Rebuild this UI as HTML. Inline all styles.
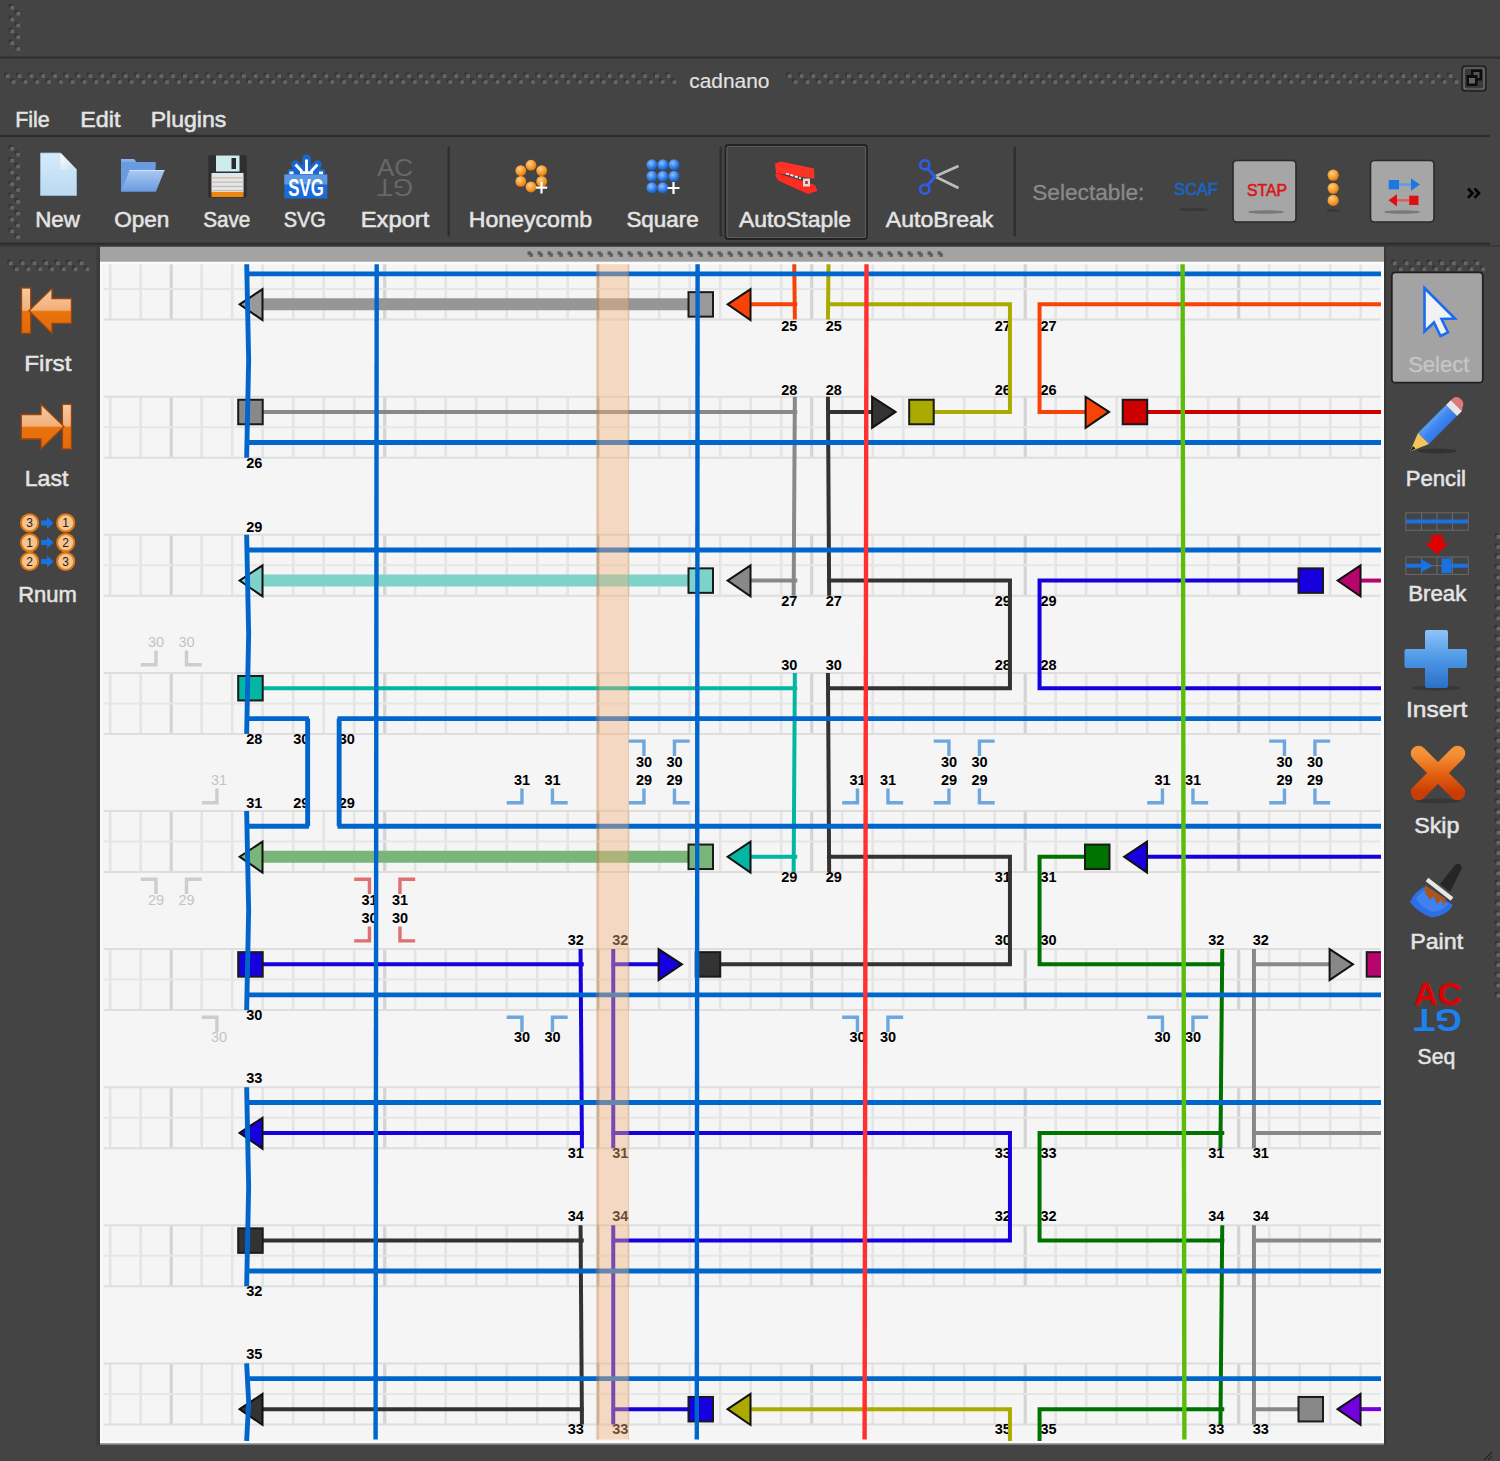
<!DOCTYPE html>
<html><head><meta charset="utf-8"><title>cadnano</title>
<style>
html,body{margin:0;padding:0;}
body{width:1500px;height:1461px;overflow:hidden;background:#444444;position:relative;font-family:"Liberation Sans",sans-serif;}
.lb{position:absolute;text-align:center;line-height:1;white-space:nowrap;-webkit-text-stroke:0.45px currentColor;}
.mn{position:absolute;line-height:1;white-space:nowrap;-webkit-text-stroke:0.45px currentColor;}
.abs{position:absolute;}
svg text.n{font-family:"Liberation Sans",sans-serif;font-weight:bold;font-size:14.5px;}
svg text.g{font-family:"Liberation Sans",sans-serif;font-weight:normal;font-size:14.5px;}
</style></head><body>

<svg class="abs" style="left:0;top:0" width="1500" height="1461">
<rect x="0" y="56.5" width="1500" height="2.2" fill="#303030"/>
<rect x="0" y="134.8" width="1490" height="2.2" fill="#2c2c2c"/>
<rect x="0" y="242.6" width="1490" height="2.6" fill="#2e2e2e"/>
<rect x="0" y="245.2" width="1500" height="1.6" fill="#3a3a3a"/>
<rect x="8.7" y="4.2" width="3.4" height="3.4" fill="#343434"/><rect x="10.5" y="6.0" width="3.6" height="3.6" fill="#676767"/><rect x="14.7" y="10.1" width="3.4" height="3.4" fill="#343434"/><rect x="16.5" y="11.9" width="3.6" height="3.6" fill="#676767"/><rect x="8.7" y="16.0" width="3.4" height="3.4" fill="#343434"/><rect x="10.5" y="17.8" width="3.6" height="3.6" fill="#676767"/><rect x="14.7" y="21.9" width="3.4" height="3.4" fill="#343434"/><rect x="16.5" y="23.7" width="3.6" height="3.6" fill="#676767"/><rect x="8.7" y="27.8" width="3.4" height="3.4" fill="#343434"/><rect x="10.5" y="29.6" width="3.6" height="3.6" fill="#676767"/><rect x="14.7" y="33.7" width="3.4" height="3.4" fill="#343434"/><rect x="16.5" y="35.5" width="3.6" height="3.6" fill="#676767"/><rect x="8.7" y="39.6" width="3.4" height="3.4" fill="#343434"/><rect x="10.5" y="41.4" width="3.6" height="3.6" fill="#676767"/><rect x="14.7" y="45.5" width="3.4" height="3.4" fill="#343434"/><rect x="16.5" y="47.3" width="3.6" height="3.6" fill="#676767"/>
<rect x="4.2" y="72.5" width="3.4" height="3.4" fill="#343434"/><rect x="6.0" y="74.3" width="3.6" height="3.6" fill="#676767"/><rect x="10.1" y="78.5" width="3.4" height="3.4" fill="#343434"/><rect x="11.9" y="80.3" width="3.6" height="3.6" fill="#676767"/><rect x="16.0" y="72.5" width="3.4" height="3.4" fill="#343434"/><rect x="17.8" y="74.3" width="3.6" height="3.6" fill="#676767"/><rect x="21.9" y="78.5" width="3.4" height="3.4" fill="#343434"/><rect x="23.7" y="80.3" width="3.6" height="3.6" fill="#676767"/><rect x="27.8" y="72.5" width="3.4" height="3.4" fill="#343434"/><rect x="29.6" y="74.3" width="3.6" height="3.6" fill="#676767"/><rect x="33.7" y="78.5" width="3.4" height="3.4" fill="#343434"/><rect x="35.5" y="80.3" width="3.6" height="3.6" fill="#676767"/><rect x="39.6" y="72.5" width="3.4" height="3.4" fill="#343434"/><rect x="41.4" y="74.3" width="3.6" height="3.6" fill="#676767"/><rect x="45.5" y="78.5" width="3.4" height="3.4" fill="#343434"/><rect x="47.3" y="80.3" width="3.6" height="3.6" fill="#676767"/><rect x="51.4" y="72.5" width="3.4" height="3.4" fill="#343434"/><rect x="53.2" y="74.3" width="3.6" height="3.6" fill="#676767"/><rect x="57.3" y="78.5" width="3.4" height="3.4" fill="#343434"/><rect x="59.1" y="80.3" width="3.6" height="3.6" fill="#676767"/><rect x="63.2" y="72.5" width="3.4" height="3.4" fill="#343434"/><rect x="65.0" y="74.3" width="3.6" height="3.6" fill="#676767"/><rect x="69.1" y="78.5" width="3.4" height="3.4" fill="#343434"/><rect x="70.9" y="80.3" width="3.6" height="3.6" fill="#676767"/><rect x="75.0" y="72.5" width="3.4" height="3.4" fill="#343434"/><rect x="76.8" y="74.3" width="3.6" height="3.6" fill="#676767"/><rect x="80.9" y="78.5" width="3.4" height="3.4" fill="#343434"/><rect x="82.7" y="80.3" width="3.6" height="3.6" fill="#676767"/><rect x="86.8" y="72.5" width="3.4" height="3.4" fill="#343434"/><rect x="88.6" y="74.3" width="3.6" height="3.6" fill="#676767"/><rect x="92.7" y="78.5" width="3.4" height="3.4" fill="#343434"/><rect x="94.5" y="80.3" width="3.6" height="3.6" fill="#676767"/><rect x="98.6" y="72.5" width="3.4" height="3.4" fill="#343434"/><rect x="100.4" y="74.3" width="3.6" height="3.6" fill="#676767"/><rect x="104.5" y="78.5" width="3.4" height="3.4" fill="#343434"/><rect x="106.3" y="80.3" width="3.6" height="3.6" fill="#676767"/><rect x="110.4" y="72.5" width="3.4" height="3.4" fill="#343434"/><rect x="112.2" y="74.3" width="3.6" height="3.6" fill="#676767"/><rect x="116.3" y="78.5" width="3.4" height="3.4" fill="#343434"/><rect x="118.1" y="80.3" width="3.6" height="3.6" fill="#676767"/><rect x="122.2" y="72.5" width="3.4" height="3.4" fill="#343434"/><rect x="124.0" y="74.3" width="3.6" height="3.6" fill="#676767"/><rect x="128.1" y="78.5" width="3.4" height="3.4" fill="#343434"/><rect x="129.9" y="80.3" width="3.6" height="3.6" fill="#676767"/><rect x="134.0" y="72.5" width="3.4" height="3.4" fill="#343434"/><rect x="135.8" y="74.3" width="3.6" height="3.6" fill="#676767"/><rect x="139.9" y="78.5" width="3.4" height="3.4" fill="#343434"/><rect x="141.7" y="80.3" width="3.6" height="3.6" fill="#676767"/><rect x="145.8" y="72.5" width="3.4" height="3.4" fill="#343434"/><rect x="147.6" y="74.3" width="3.6" height="3.6" fill="#676767"/><rect x="151.7" y="78.5" width="3.4" height="3.4" fill="#343434"/><rect x="153.5" y="80.3" width="3.6" height="3.6" fill="#676767"/><rect x="157.6" y="72.5" width="3.4" height="3.4" fill="#343434"/><rect x="159.4" y="74.3" width="3.6" height="3.6" fill="#676767"/><rect x="163.5" y="78.5" width="3.4" height="3.4" fill="#343434"/><rect x="165.3" y="80.3" width="3.6" height="3.6" fill="#676767"/><rect x="169.4" y="72.5" width="3.4" height="3.4" fill="#343434"/><rect x="171.2" y="74.3" width="3.6" height="3.6" fill="#676767"/><rect x="175.3" y="78.5" width="3.4" height="3.4" fill="#343434"/><rect x="177.1" y="80.3" width="3.6" height="3.6" fill="#676767"/><rect x="181.2" y="72.5" width="3.4" height="3.4" fill="#343434"/><rect x="183.0" y="74.3" width="3.6" height="3.6" fill="#676767"/><rect x="187.1" y="78.5" width="3.4" height="3.4" fill="#343434"/><rect x="188.9" y="80.3" width="3.6" height="3.6" fill="#676767"/><rect x="193.0" y="72.5" width="3.4" height="3.4" fill="#343434"/><rect x="194.8" y="74.3" width="3.6" height="3.6" fill="#676767"/><rect x="198.9" y="78.5" width="3.4" height="3.4" fill="#343434"/><rect x="200.7" y="80.3" width="3.6" height="3.6" fill="#676767"/><rect x="204.8" y="72.5" width="3.4" height="3.4" fill="#343434"/><rect x="206.6" y="74.3" width="3.6" height="3.6" fill="#676767"/><rect x="210.7" y="78.5" width="3.4" height="3.4" fill="#343434"/><rect x="212.5" y="80.3" width="3.6" height="3.6" fill="#676767"/><rect x="216.6" y="72.5" width="3.4" height="3.4" fill="#343434"/><rect x="218.4" y="74.3" width="3.6" height="3.6" fill="#676767"/><rect x="222.5" y="78.5" width="3.4" height="3.4" fill="#343434"/><rect x="224.3" y="80.3" width="3.6" height="3.6" fill="#676767"/><rect x="228.4" y="72.5" width="3.4" height="3.4" fill="#343434"/><rect x="230.2" y="74.3" width="3.6" height="3.6" fill="#676767"/><rect x="234.3" y="78.5" width="3.4" height="3.4" fill="#343434"/><rect x="236.1" y="80.3" width="3.6" height="3.6" fill="#676767"/><rect x="240.2" y="72.5" width="3.4" height="3.4" fill="#343434"/><rect x="242.0" y="74.3" width="3.6" height="3.6" fill="#676767"/><rect x="246.1" y="78.5" width="3.4" height="3.4" fill="#343434"/><rect x="247.9" y="80.3" width="3.6" height="3.6" fill="#676767"/><rect x="252.0" y="72.5" width="3.4" height="3.4" fill="#343434"/><rect x="253.8" y="74.3" width="3.6" height="3.6" fill="#676767"/><rect x="257.9" y="78.5" width="3.4" height="3.4" fill="#343434"/><rect x="259.7" y="80.3" width="3.6" height="3.6" fill="#676767"/><rect x="263.8" y="72.5" width="3.4" height="3.4" fill="#343434"/><rect x="265.6" y="74.3" width="3.6" height="3.6" fill="#676767"/><rect x="269.7" y="78.5" width="3.4" height="3.4" fill="#343434"/><rect x="271.5" y="80.3" width="3.6" height="3.6" fill="#676767"/><rect x="275.6" y="72.5" width="3.4" height="3.4" fill="#343434"/><rect x="277.4" y="74.3" width="3.6" height="3.6" fill="#676767"/><rect x="281.5" y="78.5" width="3.4" height="3.4" fill="#343434"/><rect x="283.3" y="80.3" width="3.6" height="3.6" fill="#676767"/><rect x="287.4" y="72.5" width="3.4" height="3.4" fill="#343434"/><rect x="289.2" y="74.3" width="3.6" height="3.6" fill="#676767"/><rect x="293.3" y="78.5" width="3.4" height="3.4" fill="#343434"/><rect x="295.1" y="80.3" width="3.6" height="3.6" fill="#676767"/><rect x="299.2" y="72.5" width="3.4" height="3.4" fill="#343434"/><rect x="301.0" y="74.3" width="3.6" height="3.6" fill="#676767"/><rect x="305.1" y="78.5" width="3.4" height="3.4" fill="#343434"/><rect x="306.9" y="80.3" width="3.6" height="3.6" fill="#676767"/><rect x="311.0" y="72.5" width="3.4" height="3.4" fill="#343434"/><rect x="312.8" y="74.3" width="3.6" height="3.6" fill="#676767"/><rect x="316.9" y="78.5" width="3.4" height="3.4" fill="#343434"/><rect x="318.7" y="80.3" width="3.6" height="3.6" fill="#676767"/><rect x="322.8" y="72.5" width="3.4" height="3.4" fill="#343434"/><rect x="324.6" y="74.3" width="3.6" height="3.6" fill="#676767"/><rect x="328.7" y="78.5" width="3.4" height="3.4" fill="#343434"/><rect x="330.5" y="80.3" width="3.6" height="3.6" fill="#676767"/><rect x="334.6" y="72.5" width="3.4" height="3.4" fill="#343434"/><rect x="336.4" y="74.3" width="3.6" height="3.6" fill="#676767"/><rect x="340.5" y="78.5" width="3.4" height="3.4" fill="#343434"/><rect x="342.3" y="80.3" width="3.6" height="3.6" fill="#676767"/><rect x="346.4" y="72.5" width="3.4" height="3.4" fill="#343434"/><rect x="348.2" y="74.3" width="3.6" height="3.6" fill="#676767"/><rect x="352.3" y="78.5" width="3.4" height="3.4" fill="#343434"/><rect x="354.1" y="80.3" width="3.6" height="3.6" fill="#676767"/><rect x="358.2" y="72.5" width="3.4" height="3.4" fill="#343434"/><rect x="360.0" y="74.3" width="3.6" height="3.6" fill="#676767"/><rect x="364.1" y="78.5" width="3.4" height="3.4" fill="#343434"/><rect x="365.9" y="80.3" width="3.6" height="3.6" fill="#676767"/><rect x="370.0" y="72.5" width="3.4" height="3.4" fill="#343434"/><rect x="371.8" y="74.3" width="3.6" height="3.6" fill="#676767"/><rect x="375.9" y="78.5" width="3.4" height="3.4" fill="#343434"/><rect x="377.7" y="80.3" width="3.6" height="3.6" fill="#676767"/><rect x="381.8" y="72.5" width="3.4" height="3.4" fill="#343434"/><rect x="383.6" y="74.3" width="3.6" height="3.6" fill="#676767"/><rect x="387.7" y="78.5" width="3.4" height="3.4" fill="#343434"/><rect x="389.5" y="80.3" width="3.6" height="3.6" fill="#676767"/><rect x="393.6" y="72.5" width="3.4" height="3.4" fill="#343434"/><rect x="395.4" y="74.3" width="3.6" height="3.6" fill="#676767"/><rect x="399.5" y="78.5" width="3.4" height="3.4" fill="#343434"/><rect x="401.3" y="80.3" width="3.6" height="3.6" fill="#676767"/><rect x="405.4" y="72.5" width="3.4" height="3.4" fill="#343434"/><rect x="407.2" y="74.3" width="3.6" height="3.6" fill="#676767"/><rect x="411.3" y="78.5" width="3.4" height="3.4" fill="#343434"/><rect x="413.1" y="80.3" width="3.6" height="3.6" fill="#676767"/><rect x="417.2" y="72.5" width="3.4" height="3.4" fill="#343434"/><rect x="419.0" y="74.3" width="3.6" height="3.6" fill="#676767"/><rect x="423.1" y="78.5" width="3.4" height="3.4" fill="#343434"/><rect x="424.9" y="80.3" width="3.6" height="3.6" fill="#676767"/><rect x="429.0" y="72.5" width="3.4" height="3.4" fill="#343434"/><rect x="430.8" y="74.3" width="3.6" height="3.6" fill="#676767"/><rect x="434.9" y="78.5" width="3.4" height="3.4" fill="#343434"/><rect x="436.7" y="80.3" width="3.6" height="3.6" fill="#676767"/><rect x="440.8" y="72.5" width="3.4" height="3.4" fill="#343434"/><rect x="442.6" y="74.3" width="3.6" height="3.6" fill="#676767"/><rect x="446.7" y="78.5" width="3.4" height="3.4" fill="#343434"/><rect x="448.5" y="80.3" width="3.6" height="3.6" fill="#676767"/><rect x="452.6" y="72.5" width="3.4" height="3.4" fill="#343434"/><rect x="454.4" y="74.3" width="3.6" height="3.6" fill="#676767"/><rect x="458.5" y="78.5" width="3.4" height="3.4" fill="#343434"/><rect x="460.3" y="80.3" width="3.6" height="3.6" fill="#676767"/><rect x="464.4" y="72.5" width="3.4" height="3.4" fill="#343434"/><rect x="466.2" y="74.3" width="3.6" height="3.6" fill="#676767"/><rect x="470.3" y="78.5" width="3.4" height="3.4" fill="#343434"/><rect x="472.1" y="80.3" width="3.6" height="3.6" fill="#676767"/><rect x="476.2" y="72.5" width="3.4" height="3.4" fill="#343434"/><rect x="478.0" y="74.3" width="3.6" height="3.6" fill="#676767"/><rect x="482.1" y="78.5" width="3.4" height="3.4" fill="#343434"/><rect x="483.9" y="80.3" width="3.6" height="3.6" fill="#676767"/><rect x="488.0" y="72.5" width="3.4" height="3.4" fill="#343434"/><rect x="489.8" y="74.3" width="3.6" height="3.6" fill="#676767"/><rect x="493.9" y="78.5" width="3.4" height="3.4" fill="#343434"/><rect x="495.7" y="80.3" width="3.6" height="3.6" fill="#676767"/><rect x="499.8" y="72.5" width="3.4" height="3.4" fill="#343434"/><rect x="501.6" y="74.3" width="3.6" height="3.6" fill="#676767"/><rect x="505.7" y="78.5" width="3.4" height="3.4" fill="#343434"/><rect x="507.5" y="80.3" width="3.6" height="3.6" fill="#676767"/><rect x="511.6" y="72.5" width="3.4" height="3.4" fill="#343434"/><rect x="513.4" y="74.3" width="3.6" height="3.6" fill="#676767"/><rect x="517.5" y="78.5" width="3.4" height="3.4" fill="#343434"/><rect x="519.3" y="80.3" width="3.6" height="3.6" fill="#676767"/><rect x="523.4" y="72.5" width="3.4" height="3.4" fill="#343434"/><rect x="525.2" y="74.3" width="3.6" height="3.6" fill="#676767"/><rect x="529.3" y="78.5" width="3.4" height="3.4" fill="#343434"/><rect x="531.1" y="80.3" width="3.6" height="3.6" fill="#676767"/><rect x="535.2" y="72.5" width="3.4" height="3.4" fill="#343434"/><rect x="537.0" y="74.3" width="3.6" height="3.6" fill="#676767"/><rect x="541.1" y="78.5" width="3.4" height="3.4" fill="#343434"/><rect x="542.9" y="80.3" width="3.6" height="3.6" fill="#676767"/><rect x="547.0" y="72.5" width="3.4" height="3.4" fill="#343434"/><rect x="548.8" y="74.3" width="3.6" height="3.6" fill="#676767"/><rect x="552.9" y="78.5" width="3.4" height="3.4" fill="#343434"/><rect x="554.7" y="80.3" width="3.6" height="3.6" fill="#676767"/><rect x="558.8" y="72.5" width="3.4" height="3.4" fill="#343434"/><rect x="560.6" y="74.3" width="3.6" height="3.6" fill="#676767"/><rect x="564.7" y="78.5" width="3.4" height="3.4" fill="#343434"/><rect x="566.5" y="80.3" width="3.6" height="3.6" fill="#676767"/><rect x="570.6" y="72.5" width="3.4" height="3.4" fill="#343434"/><rect x="572.4" y="74.3" width="3.6" height="3.6" fill="#676767"/><rect x="576.5" y="78.5" width="3.4" height="3.4" fill="#343434"/><rect x="578.3" y="80.3" width="3.6" height="3.6" fill="#676767"/><rect x="582.4" y="72.5" width="3.4" height="3.4" fill="#343434"/><rect x="584.2" y="74.3" width="3.6" height="3.6" fill="#676767"/><rect x="588.3" y="78.5" width="3.4" height="3.4" fill="#343434"/><rect x="590.1" y="80.3" width="3.6" height="3.6" fill="#676767"/><rect x="594.2" y="72.5" width="3.4" height="3.4" fill="#343434"/><rect x="596.0" y="74.3" width="3.6" height="3.6" fill="#676767"/><rect x="600.1" y="78.5" width="3.4" height="3.4" fill="#343434"/><rect x="601.9" y="80.3" width="3.6" height="3.6" fill="#676767"/><rect x="606.0" y="72.5" width="3.4" height="3.4" fill="#343434"/><rect x="607.8" y="74.3" width="3.6" height="3.6" fill="#676767"/><rect x="611.9" y="78.5" width="3.4" height="3.4" fill="#343434"/><rect x="613.7" y="80.3" width="3.6" height="3.6" fill="#676767"/><rect x="617.8" y="72.5" width="3.4" height="3.4" fill="#343434"/><rect x="619.6" y="74.3" width="3.6" height="3.6" fill="#676767"/><rect x="623.7" y="78.5" width="3.4" height="3.4" fill="#343434"/><rect x="625.5" y="80.3" width="3.6" height="3.6" fill="#676767"/><rect x="629.6" y="72.5" width="3.4" height="3.4" fill="#343434"/><rect x="631.4" y="74.3" width="3.6" height="3.6" fill="#676767"/><rect x="635.5" y="78.5" width="3.4" height="3.4" fill="#343434"/><rect x="637.3" y="80.3" width="3.6" height="3.6" fill="#676767"/><rect x="641.4" y="72.5" width="3.4" height="3.4" fill="#343434"/><rect x="643.2" y="74.3" width="3.6" height="3.6" fill="#676767"/><rect x="647.3" y="78.5" width="3.4" height="3.4" fill="#343434"/><rect x="649.1" y="80.3" width="3.6" height="3.6" fill="#676767"/><rect x="653.2" y="72.5" width="3.4" height="3.4" fill="#343434"/><rect x="655.0" y="74.3" width="3.6" height="3.6" fill="#676767"/><rect x="659.1" y="78.5" width="3.4" height="3.4" fill="#343434"/><rect x="660.9" y="80.3" width="3.6" height="3.6" fill="#676767"/><rect x="665.0" y="72.5" width="3.4" height="3.4" fill="#343434"/><rect x="666.8" y="74.3" width="3.6" height="3.6" fill="#676767"/><rect x="670.9" y="78.5" width="3.4" height="3.4" fill="#343434"/><rect x="672.7" y="80.3" width="3.6" height="3.6" fill="#676767"/>
<rect x="786.2" y="72.5" width="3.4" height="3.4" fill="#343434"/><rect x="788.0" y="74.3" width="3.6" height="3.6" fill="#676767"/><rect x="792.1" y="78.5" width="3.4" height="3.4" fill="#343434"/><rect x="793.9" y="80.3" width="3.6" height="3.6" fill="#676767"/><rect x="798.0" y="72.5" width="3.4" height="3.4" fill="#343434"/><rect x="799.8" y="74.3" width="3.6" height="3.6" fill="#676767"/><rect x="803.9" y="78.5" width="3.4" height="3.4" fill="#343434"/><rect x="805.7" y="80.3" width="3.6" height="3.6" fill="#676767"/><rect x="809.8" y="72.5" width="3.4" height="3.4" fill="#343434"/><rect x="811.6" y="74.3" width="3.6" height="3.6" fill="#676767"/><rect x="815.7" y="78.5" width="3.4" height="3.4" fill="#343434"/><rect x="817.5" y="80.3" width="3.6" height="3.6" fill="#676767"/><rect x="821.6" y="72.5" width="3.4" height="3.4" fill="#343434"/><rect x="823.4" y="74.3" width="3.6" height="3.6" fill="#676767"/><rect x="827.5" y="78.5" width="3.4" height="3.4" fill="#343434"/><rect x="829.3" y="80.3" width="3.6" height="3.6" fill="#676767"/><rect x="833.4" y="72.5" width="3.4" height="3.4" fill="#343434"/><rect x="835.2" y="74.3" width="3.6" height="3.6" fill="#676767"/><rect x="839.3" y="78.5" width="3.4" height="3.4" fill="#343434"/><rect x="841.1" y="80.3" width="3.6" height="3.6" fill="#676767"/><rect x="845.2" y="72.5" width="3.4" height="3.4" fill="#343434"/><rect x="847.0" y="74.3" width="3.6" height="3.6" fill="#676767"/><rect x="851.1" y="78.5" width="3.4" height="3.4" fill="#343434"/><rect x="852.9" y="80.3" width="3.6" height="3.6" fill="#676767"/><rect x="857.0" y="72.5" width="3.4" height="3.4" fill="#343434"/><rect x="858.8" y="74.3" width="3.6" height="3.6" fill="#676767"/><rect x="862.9" y="78.5" width="3.4" height="3.4" fill="#343434"/><rect x="864.7" y="80.3" width="3.6" height="3.6" fill="#676767"/><rect x="868.8" y="72.5" width="3.4" height="3.4" fill="#343434"/><rect x="870.6" y="74.3" width="3.6" height="3.6" fill="#676767"/><rect x="874.7" y="78.5" width="3.4" height="3.4" fill="#343434"/><rect x="876.5" y="80.3" width="3.6" height="3.6" fill="#676767"/><rect x="880.6" y="72.5" width="3.4" height="3.4" fill="#343434"/><rect x="882.4" y="74.3" width="3.6" height="3.6" fill="#676767"/><rect x="886.5" y="78.5" width="3.4" height="3.4" fill="#343434"/><rect x="888.3" y="80.3" width="3.6" height="3.6" fill="#676767"/><rect x="892.4" y="72.5" width="3.4" height="3.4" fill="#343434"/><rect x="894.2" y="74.3" width="3.6" height="3.6" fill="#676767"/><rect x="898.3" y="78.5" width="3.4" height="3.4" fill="#343434"/><rect x="900.1" y="80.3" width="3.6" height="3.6" fill="#676767"/><rect x="904.2" y="72.5" width="3.4" height="3.4" fill="#343434"/><rect x="906.0" y="74.3" width="3.6" height="3.6" fill="#676767"/><rect x="910.1" y="78.5" width="3.4" height="3.4" fill="#343434"/><rect x="911.9" y="80.3" width="3.6" height="3.6" fill="#676767"/><rect x="916.0" y="72.5" width="3.4" height="3.4" fill="#343434"/><rect x="917.8" y="74.3" width="3.6" height="3.6" fill="#676767"/><rect x="921.9" y="78.5" width="3.4" height="3.4" fill="#343434"/><rect x="923.7" y="80.3" width="3.6" height="3.6" fill="#676767"/><rect x="927.8" y="72.5" width="3.4" height="3.4" fill="#343434"/><rect x="929.6" y="74.3" width="3.6" height="3.6" fill="#676767"/><rect x="933.7" y="78.5" width="3.4" height="3.4" fill="#343434"/><rect x="935.5" y="80.3" width="3.6" height="3.6" fill="#676767"/><rect x="939.6" y="72.5" width="3.4" height="3.4" fill="#343434"/><rect x="941.4" y="74.3" width="3.6" height="3.6" fill="#676767"/><rect x="945.5" y="78.5" width="3.4" height="3.4" fill="#343434"/><rect x="947.3" y="80.3" width="3.6" height="3.6" fill="#676767"/><rect x="951.4" y="72.5" width="3.4" height="3.4" fill="#343434"/><rect x="953.2" y="74.3" width="3.6" height="3.6" fill="#676767"/><rect x="957.3" y="78.5" width="3.4" height="3.4" fill="#343434"/><rect x="959.1" y="80.3" width="3.6" height="3.6" fill="#676767"/><rect x="963.2" y="72.5" width="3.4" height="3.4" fill="#343434"/><rect x="965.0" y="74.3" width="3.6" height="3.6" fill="#676767"/><rect x="969.1" y="78.5" width="3.4" height="3.4" fill="#343434"/><rect x="970.9" y="80.3" width="3.6" height="3.6" fill="#676767"/><rect x="975.0" y="72.5" width="3.4" height="3.4" fill="#343434"/><rect x="976.8" y="74.3" width="3.6" height="3.6" fill="#676767"/><rect x="980.9" y="78.5" width="3.4" height="3.4" fill="#343434"/><rect x="982.7" y="80.3" width="3.6" height="3.6" fill="#676767"/><rect x="986.8" y="72.5" width="3.4" height="3.4" fill="#343434"/><rect x="988.6" y="74.3" width="3.6" height="3.6" fill="#676767"/><rect x="992.7" y="78.5" width="3.4" height="3.4" fill="#343434"/><rect x="994.5" y="80.3" width="3.6" height="3.6" fill="#676767"/><rect x="998.6" y="72.5" width="3.4" height="3.4" fill="#343434"/><rect x="1000.4" y="74.3" width="3.6" height="3.6" fill="#676767"/><rect x="1004.5" y="78.5" width="3.4" height="3.4" fill="#343434"/><rect x="1006.3" y="80.3" width="3.6" height="3.6" fill="#676767"/><rect x="1010.4" y="72.5" width="3.4" height="3.4" fill="#343434"/><rect x="1012.2" y="74.3" width="3.6" height="3.6" fill="#676767"/><rect x="1016.3" y="78.5" width="3.4" height="3.4" fill="#343434"/><rect x="1018.1" y="80.3" width="3.6" height="3.6" fill="#676767"/><rect x="1022.2" y="72.5" width="3.4" height="3.4" fill="#343434"/><rect x="1024.0" y="74.3" width="3.6" height="3.6" fill="#676767"/><rect x="1028.1" y="78.5" width="3.4" height="3.4" fill="#343434"/><rect x="1029.9" y="80.3" width="3.6" height="3.6" fill="#676767"/><rect x="1034.0" y="72.5" width="3.4" height="3.4" fill="#343434"/><rect x="1035.8" y="74.3" width="3.6" height="3.6" fill="#676767"/><rect x="1039.9" y="78.5" width="3.4" height="3.4" fill="#343434"/><rect x="1041.7" y="80.3" width="3.6" height="3.6" fill="#676767"/><rect x="1045.8" y="72.5" width="3.4" height="3.4" fill="#343434"/><rect x="1047.6" y="74.3" width="3.6" height="3.6" fill="#676767"/><rect x="1051.7" y="78.5" width="3.4" height="3.4" fill="#343434"/><rect x="1053.5" y="80.3" width="3.6" height="3.6" fill="#676767"/><rect x="1057.6" y="72.5" width="3.4" height="3.4" fill="#343434"/><rect x="1059.4" y="74.3" width="3.6" height="3.6" fill="#676767"/><rect x="1063.5" y="78.5" width="3.4" height="3.4" fill="#343434"/><rect x="1065.3" y="80.3" width="3.6" height="3.6" fill="#676767"/><rect x="1069.4" y="72.5" width="3.4" height="3.4" fill="#343434"/><rect x="1071.2" y="74.3" width="3.6" height="3.6" fill="#676767"/><rect x="1075.3" y="78.5" width="3.4" height="3.4" fill="#343434"/><rect x="1077.1" y="80.3" width="3.6" height="3.6" fill="#676767"/><rect x="1081.2" y="72.5" width="3.4" height="3.4" fill="#343434"/><rect x="1083.0" y="74.3" width="3.6" height="3.6" fill="#676767"/><rect x="1087.1" y="78.5" width="3.4" height="3.4" fill="#343434"/><rect x="1088.9" y="80.3" width="3.6" height="3.6" fill="#676767"/><rect x="1093.0" y="72.5" width="3.4" height="3.4" fill="#343434"/><rect x="1094.8" y="74.3" width="3.6" height="3.6" fill="#676767"/><rect x="1098.9" y="78.5" width="3.4" height="3.4" fill="#343434"/><rect x="1100.7" y="80.3" width="3.6" height="3.6" fill="#676767"/><rect x="1104.8" y="72.5" width="3.4" height="3.4" fill="#343434"/><rect x="1106.6" y="74.3" width="3.6" height="3.6" fill="#676767"/><rect x="1110.7" y="78.5" width="3.4" height="3.4" fill="#343434"/><rect x="1112.5" y="80.3" width="3.6" height="3.6" fill="#676767"/><rect x="1116.6" y="72.5" width="3.4" height="3.4" fill="#343434"/><rect x="1118.4" y="74.3" width="3.6" height="3.6" fill="#676767"/><rect x="1122.5" y="78.5" width="3.4" height="3.4" fill="#343434"/><rect x="1124.3" y="80.3" width="3.6" height="3.6" fill="#676767"/><rect x="1128.4" y="72.5" width="3.4" height="3.4" fill="#343434"/><rect x="1130.2" y="74.3" width="3.6" height="3.6" fill="#676767"/><rect x="1134.3" y="78.5" width="3.4" height="3.4" fill="#343434"/><rect x="1136.1" y="80.3" width="3.6" height="3.6" fill="#676767"/><rect x="1140.2" y="72.5" width="3.4" height="3.4" fill="#343434"/><rect x="1142.0" y="74.3" width="3.6" height="3.6" fill="#676767"/><rect x="1146.1" y="78.5" width="3.4" height="3.4" fill="#343434"/><rect x="1147.9" y="80.3" width="3.6" height="3.6" fill="#676767"/><rect x="1152.0" y="72.5" width="3.4" height="3.4" fill="#343434"/><rect x="1153.8" y="74.3" width="3.6" height="3.6" fill="#676767"/><rect x="1157.9" y="78.5" width="3.4" height="3.4" fill="#343434"/><rect x="1159.7" y="80.3" width="3.6" height="3.6" fill="#676767"/><rect x="1163.8" y="72.5" width="3.4" height="3.4" fill="#343434"/><rect x="1165.6" y="74.3" width="3.6" height="3.6" fill="#676767"/><rect x="1169.7" y="78.5" width="3.4" height="3.4" fill="#343434"/><rect x="1171.5" y="80.3" width="3.6" height="3.6" fill="#676767"/><rect x="1175.6" y="72.5" width="3.4" height="3.4" fill="#343434"/><rect x="1177.4" y="74.3" width="3.6" height="3.6" fill="#676767"/><rect x="1181.5" y="78.5" width="3.4" height="3.4" fill="#343434"/><rect x="1183.3" y="80.3" width="3.6" height="3.6" fill="#676767"/><rect x="1187.4" y="72.5" width="3.4" height="3.4" fill="#343434"/><rect x="1189.2" y="74.3" width="3.6" height="3.6" fill="#676767"/><rect x="1193.3" y="78.5" width="3.4" height="3.4" fill="#343434"/><rect x="1195.1" y="80.3" width="3.6" height="3.6" fill="#676767"/><rect x="1199.2" y="72.5" width="3.4" height="3.4" fill="#343434"/><rect x="1201.0" y="74.3" width="3.6" height="3.6" fill="#676767"/><rect x="1205.1" y="78.5" width="3.4" height="3.4" fill="#343434"/><rect x="1206.9" y="80.3" width="3.6" height="3.6" fill="#676767"/><rect x="1211.0" y="72.5" width="3.4" height="3.4" fill="#343434"/><rect x="1212.8" y="74.3" width="3.6" height="3.6" fill="#676767"/><rect x="1216.9" y="78.5" width="3.4" height="3.4" fill="#343434"/><rect x="1218.7" y="80.3" width="3.6" height="3.6" fill="#676767"/><rect x="1222.8" y="72.5" width="3.4" height="3.4" fill="#343434"/><rect x="1224.6" y="74.3" width="3.6" height="3.6" fill="#676767"/><rect x="1228.7" y="78.5" width="3.4" height="3.4" fill="#343434"/><rect x="1230.5" y="80.3" width="3.6" height="3.6" fill="#676767"/><rect x="1234.6" y="72.5" width="3.4" height="3.4" fill="#343434"/><rect x="1236.4" y="74.3" width="3.6" height="3.6" fill="#676767"/><rect x="1240.5" y="78.5" width="3.4" height="3.4" fill="#343434"/><rect x="1242.3" y="80.3" width="3.6" height="3.6" fill="#676767"/><rect x="1246.4" y="72.5" width="3.4" height="3.4" fill="#343434"/><rect x="1248.2" y="74.3" width="3.6" height="3.6" fill="#676767"/><rect x="1252.3" y="78.5" width="3.4" height="3.4" fill="#343434"/><rect x="1254.1" y="80.3" width="3.6" height="3.6" fill="#676767"/><rect x="1258.2" y="72.5" width="3.4" height="3.4" fill="#343434"/><rect x="1260.0" y="74.3" width="3.6" height="3.6" fill="#676767"/><rect x="1264.1" y="78.5" width="3.4" height="3.4" fill="#343434"/><rect x="1265.9" y="80.3" width="3.6" height="3.6" fill="#676767"/><rect x="1270.0" y="72.5" width="3.4" height="3.4" fill="#343434"/><rect x="1271.8" y="74.3" width="3.6" height="3.6" fill="#676767"/><rect x="1275.9" y="78.5" width="3.4" height="3.4" fill="#343434"/><rect x="1277.7" y="80.3" width="3.6" height="3.6" fill="#676767"/><rect x="1281.8" y="72.5" width="3.4" height="3.4" fill="#343434"/><rect x="1283.6" y="74.3" width="3.6" height="3.6" fill="#676767"/><rect x="1287.7" y="78.5" width="3.4" height="3.4" fill="#343434"/><rect x="1289.5" y="80.3" width="3.6" height="3.6" fill="#676767"/><rect x="1293.6" y="72.5" width="3.4" height="3.4" fill="#343434"/><rect x="1295.4" y="74.3" width="3.6" height="3.6" fill="#676767"/><rect x="1299.5" y="78.5" width="3.4" height="3.4" fill="#343434"/><rect x="1301.3" y="80.3" width="3.6" height="3.6" fill="#676767"/><rect x="1305.4" y="72.5" width="3.4" height="3.4" fill="#343434"/><rect x="1307.2" y="74.3" width="3.6" height="3.6" fill="#676767"/><rect x="1311.3" y="78.5" width="3.4" height="3.4" fill="#343434"/><rect x="1313.1" y="80.3" width="3.6" height="3.6" fill="#676767"/><rect x="1317.2" y="72.5" width="3.4" height="3.4" fill="#343434"/><rect x="1319.0" y="74.3" width="3.6" height="3.6" fill="#676767"/><rect x="1323.1" y="78.5" width="3.4" height="3.4" fill="#343434"/><rect x="1324.9" y="80.3" width="3.6" height="3.6" fill="#676767"/><rect x="1329.0" y="72.5" width="3.4" height="3.4" fill="#343434"/><rect x="1330.8" y="74.3" width="3.6" height="3.6" fill="#676767"/><rect x="1334.9" y="78.5" width="3.4" height="3.4" fill="#343434"/><rect x="1336.7" y="80.3" width="3.6" height="3.6" fill="#676767"/><rect x="1340.8" y="72.5" width="3.4" height="3.4" fill="#343434"/><rect x="1342.6" y="74.3" width="3.6" height="3.6" fill="#676767"/><rect x="1346.7" y="78.5" width="3.4" height="3.4" fill="#343434"/><rect x="1348.5" y="80.3" width="3.6" height="3.6" fill="#676767"/><rect x="1352.6" y="72.5" width="3.4" height="3.4" fill="#343434"/><rect x="1354.4" y="74.3" width="3.6" height="3.6" fill="#676767"/><rect x="1358.5" y="78.5" width="3.4" height="3.4" fill="#343434"/><rect x="1360.3" y="80.3" width="3.6" height="3.6" fill="#676767"/><rect x="1364.4" y="72.5" width="3.4" height="3.4" fill="#343434"/><rect x="1366.2" y="74.3" width="3.6" height="3.6" fill="#676767"/><rect x="1370.3" y="78.5" width="3.4" height="3.4" fill="#343434"/><rect x="1372.1" y="80.3" width="3.6" height="3.6" fill="#676767"/><rect x="1376.2" y="72.5" width="3.4" height="3.4" fill="#343434"/><rect x="1378.0" y="74.3" width="3.6" height="3.6" fill="#676767"/><rect x="1382.1" y="78.5" width="3.4" height="3.4" fill="#343434"/><rect x="1383.9" y="80.3" width="3.6" height="3.6" fill="#676767"/><rect x="1388.0" y="72.5" width="3.4" height="3.4" fill="#343434"/><rect x="1389.8" y="74.3" width="3.6" height="3.6" fill="#676767"/><rect x="1393.9" y="78.5" width="3.4" height="3.4" fill="#343434"/><rect x="1395.7" y="80.3" width="3.6" height="3.6" fill="#676767"/><rect x="1399.8" y="72.5" width="3.4" height="3.4" fill="#343434"/><rect x="1401.6" y="74.3" width="3.6" height="3.6" fill="#676767"/><rect x="1405.7" y="78.5" width="3.4" height="3.4" fill="#343434"/><rect x="1407.5" y="80.3" width="3.6" height="3.6" fill="#676767"/><rect x="1411.6" y="72.5" width="3.4" height="3.4" fill="#343434"/><rect x="1413.4" y="74.3" width="3.6" height="3.6" fill="#676767"/><rect x="1417.5" y="78.5" width="3.4" height="3.4" fill="#343434"/><rect x="1419.3" y="80.3" width="3.6" height="3.6" fill="#676767"/><rect x="1423.4" y="72.5" width="3.4" height="3.4" fill="#343434"/><rect x="1425.2" y="74.3" width="3.6" height="3.6" fill="#676767"/><rect x="1429.3" y="78.5" width="3.4" height="3.4" fill="#343434"/><rect x="1431.1" y="80.3" width="3.6" height="3.6" fill="#676767"/><rect x="1435.2" y="72.5" width="3.4" height="3.4" fill="#343434"/><rect x="1437.0" y="74.3" width="3.6" height="3.6" fill="#676767"/><rect x="1441.1" y="78.5" width="3.4" height="3.4" fill="#343434"/><rect x="1442.9" y="80.3" width="3.6" height="3.6" fill="#676767"/><rect x="1447.0" y="72.5" width="3.4" height="3.4" fill="#343434"/><rect x="1448.8" y="74.3" width="3.6" height="3.6" fill="#676767"/><rect x="1452.9" y="78.5" width="3.4" height="3.4" fill="#343434"/><rect x="1454.7" y="80.3" width="3.6" height="3.6" fill="#676767"/>
<rect x="1462" y="66" width="24" height="25" rx="3" fill="#3a3a3a" stroke="#222" stroke-width="1.5"/>
<rect x="1464" y="68" width="20" height="21" rx="2" fill="none" stroke="#777" stroke-width="1.2"/>
<rect x="1471" y="69.5" width="11" height="11" fill="#0c0c0c"/>
<rect x="1473.5" y="72" width="6" height="6" fill="#555"/>
<rect x="1466.5" y="75" width="11" height="11" fill="#0c0c0c"/>
<rect x="1469" y="78" width="6" height="5.5" fill="#666"/>
<rect x="8.5" y="145.2" width="3.4" height="3.4" fill="#343434"/><rect x="10.3" y="147.0" width="3.6" height="3.6" fill="#676767"/><rect x="14.5" y="151.1" width="3.4" height="3.4" fill="#343434"/><rect x="16.3" y="152.9" width="3.6" height="3.6" fill="#676767"/><rect x="8.5" y="157.0" width="3.4" height="3.4" fill="#343434"/><rect x="10.3" y="158.8" width="3.6" height="3.6" fill="#676767"/><rect x="14.5" y="162.9" width="3.4" height="3.4" fill="#343434"/><rect x="16.3" y="164.7" width="3.6" height="3.6" fill="#676767"/><rect x="8.5" y="168.8" width="3.4" height="3.4" fill="#343434"/><rect x="10.3" y="170.6" width="3.6" height="3.6" fill="#676767"/><rect x="14.5" y="174.7" width="3.4" height="3.4" fill="#343434"/><rect x="16.3" y="176.5" width="3.6" height="3.6" fill="#676767"/><rect x="8.5" y="180.6" width="3.4" height="3.4" fill="#343434"/><rect x="10.3" y="182.4" width="3.6" height="3.6" fill="#676767"/><rect x="14.5" y="186.5" width="3.4" height="3.4" fill="#343434"/><rect x="16.3" y="188.3" width="3.6" height="3.6" fill="#676767"/><rect x="8.5" y="192.4" width="3.4" height="3.4" fill="#343434"/><rect x="10.3" y="194.2" width="3.6" height="3.6" fill="#676767"/><rect x="14.5" y="198.3" width="3.4" height="3.4" fill="#343434"/><rect x="16.3" y="200.1" width="3.6" height="3.6" fill="#676767"/><rect x="8.5" y="204.2" width="3.4" height="3.4" fill="#343434"/><rect x="10.3" y="206.0" width="3.6" height="3.6" fill="#676767"/><rect x="14.5" y="210.1" width="3.4" height="3.4" fill="#343434"/><rect x="16.3" y="211.9" width="3.6" height="3.6" fill="#676767"/><rect x="8.5" y="216.0" width="3.4" height="3.4" fill="#343434"/><rect x="10.3" y="217.8" width="3.6" height="3.6" fill="#676767"/><rect x="14.5" y="221.9" width="3.4" height="3.4" fill="#343434"/><rect x="16.3" y="223.7" width="3.6" height="3.6" fill="#676767"/><rect x="8.5" y="227.8" width="3.4" height="3.4" fill="#343434"/><rect x="10.3" y="229.6" width="3.6" height="3.6" fill="#676767"/><rect x="14.5" y="233.7" width="3.4" height="3.4" fill="#343434"/><rect x="16.3" y="235.5" width="3.6" height="3.6" fill="#676767"/>
<rect x="447.5" y="146.5" width="2.4" height="90" fill="#2f2f2f"/>
<rect x="719.5" y="146.5" width="2.4" height="90" fill="#2f2f2f"/>
<rect x="1013.5" y="146.5" width="2.4" height="90" fill="#2f2f2f"/>
<rect x="725.5" y="145" width="141.5" height="94" rx="3" fill="#434343" stroke="#222222" stroke-width="1.8"/>
<rect x="727" y="146.5" width="138.5" height="91" rx="2" fill="none" stroke="#5c5c5c" stroke-width="1.1"/>
<rect x="1233" y="160.5" width="63" height="61.5" rx="4" fill="#a6a6a6" stroke="#2a2a2a" stroke-width="1.6"/>
<rect x="1370.5" y="160.5" width="63.5" height="61.5" rx="4" fill="#a6a6a6" stroke="#2a2a2a" stroke-width="1.6"/>
<rect x="7.2" y="259.7" width="3.4" height="3.4" fill="#343434"/><rect x="9.0" y="261.5" width="3.6" height="3.6" fill="#676767"/><rect x="13.1" y="265.7" width="3.4" height="3.4" fill="#343434"/><rect x="14.9" y="267.5" width="3.6" height="3.6" fill="#676767"/><rect x="19.0" y="259.7" width="3.4" height="3.4" fill="#343434"/><rect x="20.8" y="261.5" width="3.6" height="3.6" fill="#676767"/><rect x="24.9" y="265.7" width="3.4" height="3.4" fill="#343434"/><rect x="26.7" y="267.5" width="3.6" height="3.6" fill="#676767"/><rect x="30.8" y="259.7" width="3.4" height="3.4" fill="#343434"/><rect x="32.6" y="261.5" width="3.6" height="3.6" fill="#676767"/><rect x="36.7" y="265.7" width="3.4" height="3.4" fill="#343434"/><rect x="38.5" y="267.5" width="3.6" height="3.6" fill="#676767"/><rect x="42.6" y="259.7" width="3.4" height="3.4" fill="#343434"/><rect x="44.4" y="261.5" width="3.6" height="3.6" fill="#676767"/><rect x="48.5" y="265.7" width="3.4" height="3.4" fill="#343434"/><rect x="50.3" y="267.5" width="3.6" height="3.6" fill="#676767"/><rect x="54.4" y="259.7" width="3.4" height="3.4" fill="#343434"/><rect x="56.2" y="261.5" width="3.6" height="3.6" fill="#676767"/><rect x="60.3" y="265.7" width="3.4" height="3.4" fill="#343434"/><rect x="62.1" y="267.5" width="3.6" height="3.6" fill="#676767"/><rect x="66.2" y="259.7" width="3.4" height="3.4" fill="#343434"/><rect x="68.0" y="261.5" width="3.6" height="3.6" fill="#676767"/><rect x="72.1" y="265.7" width="3.4" height="3.4" fill="#343434"/><rect x="73.9" y="267.5" width="3.6" height="3.6" fill="#676767"/><rect x="78.0" y="259.7" width="3.4" height="3.4" fill="#343434"/><rect x="79.8" y="261.5" width="3.6" height="3.6" fill="#676767"/><rect x="83.9" y="265.7" width="3.4" height="3.4" fill="#343434"/><rect x="85.7" y="267.5" width="3.6" height="3.6" fill="#676767"/>
<rect x="1391.2" y="259.7" width="3.4" height="3.4" fill="#343434"/><rect x="1393.0" y="261.5" width="3.6" height="3.6" fill="#676767"/><rect x="1397.1" y="265.7" width="3.4" height="3.4" fill="#343434"/><rect x="1398.9" y="267.5" width="3.6" height="3.6" fill="#676767"/><rect x="1403.0" y="259.7" width="3.4" height="3.4" fill="#343434"/><rect x="1404.8" y="261.5" width="3.6" height="3.6" fill="#676767"/><rect x="1408.9" y="265.7" width="3.4" height="3.4" fill="#343434"/><rect x="1410.7" y="267.5" width="3.6" height="3.6" fill="#676767"/><rect x="1414.8" y="259.7" width="3.4" height="3.4" fill="#343434"/><rect x="1416.6" y="261.5" width="3.6" height="3.6" fill="#676767"/><rect x="1420.7" y="265.7" width="3.4" height="3.4" fill="#343434"/><rect x="1422.5" y="267.5" width="3.6" height="3.6" fill="#676767"/><rect x="1426.6" y="259.7" width="3.4" height="3.4" fill="#343434"/><rect x="1428.4" y="261.5" width="3.6" height="3.6" fill="#676767"/><rect x="1432.5" y="265.7" width="3.4" height="3.4" fill="#343434"/><rect x="1434.3" y="267.5" width="3.6" height="3.6" fill="#676767"/><rect x="1438.4" y="259.7" width="3.4" height="3.4" fill="#343434"/><rect x="1440.2" y="261.5" width="3.6" height="3.6" fill="#676767"/><rect x="1444.3" y="265.7" width="3.4" height="3.4" fill="#343434"/><rect x="1446.1" y="267.5" width="3.6" height="3.6" fill="#676767"/><rect x="1450.2" y="259.7" width="3.4" height="3.4" fill="#343434"/><rect x="1452.0" y="261.5" width="3.6" height="3.6" fill="#676767"/><rect x="1456.1" y="265.7" width="3.4" height="3.4" fill="#343434"/><rect x="1457.9" y="267.5" width="3.6" height="3.6" fill="#676767"/><rect x="1462.0" y="259.7" width="3.4" height="3.4" fill="#343434"/><rect x="1463.8" y="261.5" width="3.6" height="3.6" fill="#676767"/><rect x="1467.9" y="265.7" width="3.4" height="3.4" fill="#343434"/><rect x="1469.7" y="267.5" width="3.6" height="3.6" fill="#676767"/><rect x="1473.8" y="259.7" width="3.4" height="3.4" fill="#343434"/><rect x="1475.6" y="261.5" width="3.6" height="3.6" fill="#676767"/><rect x="1479.7" y="265.7" width="3.4" height="3.4" fill="#343434"/><rect x="1481.5" y="267.5" width="3.6" height="3.6" fill="#676767"/>
<rect x="1494.7" y="533.2" width="3.4" height="3.4" fill="#343434"/><rect x="1496.5" y="535.0" width="3.6" height="3.6" fill="#676767"/><rect x="1500.7" y="538.3" width="3.4" height="3.4" fill="#343434"/><rect x="1502.5" y="540.1" width="3.6" height="3.6" fill="#676767"/><rect x="1494.7" y="543.4" width="3.4" height="3.4" fill="#343434"/><rect x="1496.5" y="545.2" width="3.6" height="3.6" fill="#676767"/><rect x="1500.7" y="548.5" width="3.4" height="3.4" fill="#343434"/><rect x="1502.5" y="550.3" width="3.6" height="3.6" fill="#676767"/><rect x="1494.7" y="553.6" width="3.4" height="3.4" fill="#343434"/><rect x="1496.5" y="555.4" width="3.6" height="3.6" fill="#676767"/><rect x="1500.7" y="558.7" width="3.4" height="3.4" fill="#343434"/><rect x="1502.5" y="560.5" width="3.6" height="3.6" fill="#676767"/><rect x="1494.7" y="563.8" width="3.4" height="3.4" fill="#343434"/><rect x="1496.5" y="565.6" width="3.6" height="3.6" fill="#676767"/><rect x="1500.7" y="568.9" width="3.4" height="3.4" fill="#343434"/><rect x="1502.5" y="570.7" width="3.6" height="3.6" fill="#676767"/><rect x="1494.7" y="574.0" width="3.4" height="3.4" fill="#343434"/><rect x="1496.5" y="575.8" width="3.6" height="3.6" fill="#676767"/><rect x="1500.7" y="579.1" width="3.4" height="3.4" fill="#343434"/><rect x="1502.5" y="580.9" width="3.6" height="3.6" fill="#676767"/><rect x="1494.7" y="584.2" width="3.4" height="3.4" fill="#343434"/><rect x="1496.5" y="586.0" width="3.6" height="3.6" fill="#676767"/><rect x="1500.7" y="589.3" width="3.4" height="3.4" fill="#343434"/><rect x="1502.5" y="591.1" width="3.6" height="3.6" fill="#676767"/><rect x="1494.7" y="594.4" width="3.4" height="3.4" fill="#343434"/><rect x="1496.5" y="596.2" width="3.6" height="3.6" fill="#676767"/><rect x="1500.7" y="599.5" width="3.4" height="3.4" fill="#343434"/><rect x="1502.5" y="601.3" width="3.6" height="3.6" fill="#676767"/><rect x="1494.7" y="604.6" width="3.4" height="3.4" fill="#343434"/><rect x="1496.5" y="606.4" width="3.6" height="3.6" fill="#676767"/><rect x="1500.7" y="609.7" width="3.4" height="3.4" fill="#343434"/><rect x="1502.5" y="611.5" width="3.6" height="3.6" fill="#676767"/><rect x="1494.7" y="614.8" width="3.4" height="3.4" fill="#343434"/><rect x="1496.5" y="616.6" width="3.6" height="3.6" fill="#676767"/><rect x="1500.7" y="619.9" width="3.4" height="3.4" fill="#343434"/><rect x="1502.5" y="621.7" width="3.6" height="3.6" fill="#676767"/><rect x="1494.7" y="625.0" width="3.4" height="3.4" fill="#343434"/><rect x="1496.5" y="626.8" width="3.6" height="3.6" fill="#676767"/><rect x="1500.7" y="630.1" width="3.4" height="3.4" fill="#343434"/><rect x="1502.5" y="631.9" width="3.6" height="3.6" fill="#676767"/><rect x="1494.7" y="635.2" width="3.4" height="3.4" fill="#343434"/><rect x="1496.5" y="637.0" width="3.6" height="3.6" fill="#676767"/><rect x="1500.7" y="640.3" width="3.4" height="3.4" fill="#343434"/><rect x="1502.5" y="642.1" width="3.6" height="3.6" fill="#676767"/><rect x="1494.7" y="645.4" width="3.4" height="3.4" fill="#343434"/><rect x="1496.5" y="647.2" width="3.6" height="3.6" fill="#676767"/><rect x="1500.7" y="650.5" width="3.4" height="3.4" fill="#343434"/><rect x="1502.5" y="652.3" width="3.6" height="3.6" fill="#676767"/><rect x="1494.7" y="655.6" width="3.4" height="3.4" fill="#343434"/><rect x="1496.5" y="657.4" width="3.6" height="3.6" fill="#676767"/><rect x="1500.7" y="660.7" width="3.4" height="3.4" fill="#343434"/><rect x="1502.5" y="662.5" width="3.6" height="3.6" fill="#676767"/><rect x="1494.7" y="665.8" width="3.4" height="3.4" fill="#343434"/><rect x="1496.5" y="667.6" width="3.6" height="3.6" fill="#676767"/><rect x="1500.7" y="670.9" width="3.4" height="3.4" fill="#343434"/><rect x="1502.5" y="672.7" width="3.6" height="3.6" fill="#676767"/><rect x="1494.7" y="676.0" width="3.4" height="3.4" fill="#343434"/><rect x="1496.5" y="677.8" width="3.6" height="3.6" fill="#676767"/><rect x="1500.7" y="681.1" width="3.4" height="3.4" fill="#343434"/><rect x="1502.5" y="682.9" width="3.6" height="3.6" fill="#676767"/><rect x="1494.7" y="686.2" width="3.4" height="3.4" fill="#343434"/><rect x="1496.5" y="688.0" width="3.6" height="3.6" fill="#676767"/><rect x="1500.7" y="691.3" width="3.4" height="3.4" fill="#343434"/><rect x="1502.5" y="693.1" width="3.6" height="3.6" fill="#676767"/><rect x="1494.7" y="696.4" width="3.4" height="3.4" fill="#343434"/><rect x="1496.5" y="698.2" width="3.6" height="3.6" fill="#676767"/><rect x="1500.7" y="701.5" width="3.4" height="3.4" fill="#343434"/><rect x="1502.5" y="703.3" width="3.6" height="3.6" fill="#676767"/><rect x="1494.7" y="706.6" width="3.4" height="3.4" fill="#343434"/><rect x="1496.5" y="708.4" width="3.6" height="3.6" fill="#676767"/><rect x="1500.7" y="711.7" width="3.4" height="3.4" fill="#343434"/><rect x="1502.5" y="713.5" width="3.6" height="3.6" fill="#676767"/><rect x="1494.7" y="716.8" width="3.4" height="3.4" fill="#343434"/><rect x="1496.5" y="718.6" width="3.6" height="3.6" fill="#676767"/><rect x="1500.7" y="721.9" width="3.4" height="3.4" fill="#343434"/><rect x="1502.5" y="723.7" width="3.6" height="3.6" fill="#676767"/><rect x="1494.7" y="727.0" width="3.4" height="3.4" fill="#343434"/><rect x="1496.5" y="728.8" width="3.6" height="3.6" fill="#676767"/><rect x="1500.7" y="732.1" width="3.4" height="3.4" fill="#343434"/><rect x="1502.5" y="733.9" width="3.6" height="3.6" fill="#676767"/><rect x="1494.7" y="737.2" width="3.4" height="3.4" fill="#343434"/><rect x="1496.5" y="739.0" width="3.6" height="3.6" fill="#676767"/><rect x="1500.7" y="742.3" width="3.4" height="3.4" fill="#343434"/><rect x="1502.5" y="744.1" width="3.6" height="3.6" fill="#676767"/><rect x="1494.7" y="747.4" width="3.4" height="3.4" fill="#343434"/><rect x="1496.5" y="749.2" width="3.6" height="3.6" fill="#676767"/><rect x="1500.7" y="752.5" width="3.4" height="3.4" fill="#343434"/><rect x="1502.5" y="754.3" width="3.6" height="3.6" fill="#676767"/><rect x="1494.7" y="757.6" width="3.4" height="3.4" fill="#343434"/><rect x="1496.5" y="759.4" width="3.6" height="3.6" fill="#676767"/><rect x="1500.7" y="762.7" width="3.4" height="3.4" fill="#343434"/><rect x="1502.5" y="764.5" width="3.6" height="3.6" fill="#676767"/><rect x="1494.7" y="767.8" width="3.4" height="3.4" fill="#343434"/><rect x="1496.5" y="769.6" width="3.6" height="3.6" fill="#676767"/><rect x="1500.7" y="772.9" width="3.4" height="3.4" fill="#343434"/><rect x="1502.5" y="774.7" width="3.6" height="3.6" fill="#676767"/><rect x="1494.7" y="778.0" width="3.4" height="3.4" fill="#343434"/><rect x="1496.5" y="779.8" width="3.6" height="3.6" fill="#676767"/><rect x="1500.7" y="783.1" width="3.4" height="3.4" fill="#343434"/><rect x="1502.5" y="784.9" width="3.6" height="3.6" fill="#676767"/><rect x="1494.7" y="788.2" width="3.4" height="3.4" fill="#343434"/><rect x="1496.5" y="790.0" width="3.6" height="3.6" fill="#676767"/><rect x="1500.7" y="793.3" width="3.4" height="3.4" fill="#343434"/><rect x="1502.5" y="795.1" width="3.6" height="3.6" fill="#676767"/><rect x="1494.7" y="798.4" width="3.4" height="3.4" fill="#343434"/><rect x="1496.5" y="800.2" width="3.6" height="3.6" fill="#676767"/><rect x="1500.7" y="803.5" width="3.4" height="3.4" fill="#343434"/><rect x="1502.5" y="805.3" width="3.6" height="3.6" fill="#676767"/><rect x="1494.7" y="808.6" width="3.4" height="3.4" fill="#343434"/><rect x="1496.5" y="810.4" width="3.6" height="3.6" fill="#676767"/><rect x="1500.7" y="813.7" width="3.4" height="3.4" fill="#343434"/><rect x="1502.5" y="815.5" width="3.6" height="3.6" fill="#676767"/><rect x="1494.7" y="818.8" width="3.4" height="3.4" fill="#343434"/><rect x="1496.5" y="820.6" width="3.6" height="3.6" fill="#676767"/><rect x="1500.7" y="823.9" width="3.4" height="3.4" fill="#343434"/><rect x="1502.5" y="825.7" width="3.6" height="3.6" fill="#676767"/><rect x="1494.7" y="829.0" width="3.4" height="3.4" fill="#343434"/><rect x="1496.5" y="830.8" width="3.6" height="3.6" fill="#676767"/><rect x="1500.7" y="834.1" width="3.4" height="3.4" fill="#343434"/><rect x="1502.5" y="835.9" width="3.6" height="3.6" fill="#676767"/><rect x="1494.7" y="839.2" width="3.4" height="3.4" fill="#343434"/><rect x="1496.5" y="841.0" width="3.6" height="3.6" fill="#676767"/><rect x="1500.7" y="844.3" width="3.4" height="3.4" fill="#343434"/><rect x="1502.5" y="846.1" width="3.6" height="3.6" fill="#676767"/><rect x="1494.7" y="849.4" width="3.4" height="3.4" fill="#343434"/><rect x="1496.5" y="851.2" width="3.6" height="3.6" fill="#676767"/><rect x="1500.7" y="854.5" width="3.4" height="3.4" fill="#343434"/><rect x="1502.5" y="856.3" width="3.6" height="3.6" fill="#676767"/><rect x="1494.7" y="859.6" width="3.4" height="3.4" fill="#343434"/><rect x="1496.5" y="861.4" width="3.6" height="3.6" fill="#676767"/><rect x="1500.7" y="864.7" width="3.4" height="3.4" fill="#343434"/><rect x="1502.5" y="866.5" width="3.6" height="3.6" fill="#676767"/><rect x="1494.7" y="869.8" width="3.4" height="3.4" fill="#343434"/><rect x="1496.5" y="871.6" width="3.6" height="3.6" fill="#676767"/><rect x="1500.7" y="874.9" width="3.4" height="3.4" fill="#343434"/><rect x="1502.5" y="876.7" width="3.6" height="3.6" fill="#676767"/><rect x="1494.7" y="880.0" width="3.4" height="3.4" fill="#343434"/><rect x="1496.5" y="881.8" width="3.6" height="3.6" fill="#676767"/><rect x="1500.7" y="885.1" width="3.4" height="3.4" fill="#343434"/><rect x="1502.5" y="886.9" width="3.6" height="3.6" fill="#676767"/><rect x="1494.7" y="890.2" width="3.4" height="3.4" fill="#343434"/><rect x="1496.5" y="892.0" width="3.6" height="3.6" fill="#676767"/><rect x="1500.7" y="895.3" width="3.4" height="3.4" fill="#343434"/><rect x="1502.5" y="897.1" width="3.6" height="3.6" fill="#676767"/><rect x="1494.7" y="900.4" width="3.4" height="3.4" fill="#343434"/><rect x="1496.5" y="902.2" width="3.6" height="3.6" fill="#676767"/><rect x="1500.7" y="905.5" width="3.4" height="3.4" fill="#343434"/><rect x="1502.5" y="907.3" width="3.6" height="3.6" fill="#676767"/><rect x="1494.7" y="910.6" width="3.4" height="3.4" fill="#343434"/><rect x="1496.5" y="912.4" width="3.6" height="3.6" fill="#676767"/><rect x="1500.7" y="915.7" width="3.4" height="3.4" fill="#343434"/><rect x="1502.5" y="917.5" width="3.6" height="3.6" fill="#676767"/><rect x="1494.7" y="920.8" width="3.4" height="3.4" fill="#343434"/><rect x="1496.5" y="922.6" width="3.6" height="3.6" fill="#676767"/><rect x="1500.7" y="925.9" width="3.4" height="3.4" fill="#343434"/><rect x="1502.5" y="927.7" width="3.6" height="3.6" fill="#676767"/><rect x="1494.7" y="931.0" width="3.4" height="3.4" fill="#343434"/><rect x="1496.5" y="932.8" width="3.6" height="3.6" fill="#676767"/><rect x="1500.7" y="936.1" width="3.4" height="3.4" fill="#343434"/><rect x="1502.5" y="937.9" width="3.6" height="3.6" fill="#676767"/><rect x="1494.7" y="941.2" width="3.4" height="3.4" fill="#343434"/><rect x="1496.5" y="943.0" width="3.6" height="3.6" fill="#676767"/><rect x="1500.7" y="946.3" width="3.4" height="3.4" fill="#343434"/><rect x="1502.5" y="948.1" width="3.6" height="3.6" fill="#676767"/><rect x="1494.7" y="951.4" width="3.4" height="3.4" fill="#343434"/><rect x="1496.5" y="953.2" width="3.6" height="3.6" fill="#676767"/><rect x="1500.7" y="956.5" width="3.4" height="3.4" fill="#343434"/><rect x="1502.5" y="958.3" width="3.6" height="3.6" fill="#676767"/><rect x="1494.7" y="961.6" width="3.4" height="3.4" fill="#343434"/><rect x="1496.5" y="963.4" width="3.6" height="3.6" fill="#676767"/><rect x="1500.7" y="966.7" width="3.4" height="3.4" fill="#343434"/><rect x="1502.5" y="968.5" width="3.6" height="3.6" fill="#676767"/><rect x="1494.7" y="971.8" width="3.4" height="3.4" fill="#343434"/><rect x="1496.5" y="973.6" width="3.6" height="3.6" fill="#676767"/><rect x="1500.7" y="976.9" width="3.4" height="3.4" fill="#343434"/><rect x="1502.5" y="978.7" width="3.6" height="3.6" fill="#676767"/><rect x="1494.7" y="982.0" width="3.4" height="3.4" fill="#343434"/><rect x="1496.5" y="983.8" width="3.6" height="3.6" fill="#676767"/><rect x="1500.7" y="987.1" width="3.4" height="3.4" fill="#343434"/><rect x="1502.5" y="988.9" width="3.6" height="3.6" fill="#676767"/><rect x="1494.7" y="992.2" width="3.4" height="3.4" fill="#343434"/><rect x="1496.5" y="994.0" width="3.6" height="3.6" fill="#676767"/><rect x="1500.7" y="997.3" width="3.4" height="3.4" fill="#343434"/><rect x="1502.5" y="999.1" width="3.6" height="3.6" fill="#676767"/>
<rect x="1391.8" y="272.3" width="91" height="110.4" rx="3.5" fill="#a3a3a3" stroke="#202020" stroke-width="1.8"/>
<rect x="100" y="246.8" width="1284" height="15" fill="#a3a3a3"/>
<rect x="527.5" y="251.3" width="3.6" height="3.6" fill="#5e5e5e"/><rect x="529.3" y="253.2" width="3.6" height="3.6" fill="#5e5e5e"/>
<rect x="537.5" y="251.3" width="3.6" height="3.6" fill="#5e5e5e"/><rect x="539.3" y="253.2" width="3.6" height="3.6" fill="#5e5e5e"/>
<rect x="547.5" y="251.3" width="3.6" height="3.6" fill="#5e5e5e"/><rect x="549.3" y="253.2" width="3.6" height="3.6" fill="#5e5e5e"/>
<rect x="557.5" y="251.3" width="3.6" height="3.6" fill="#5e5e5e"/><rect x="559.3" y="253.2" width="3.6" height="3.6" fill="#5e5e5e"/>
<rect x="567.5" y="251.3" width="3.6" height="3.6" fill="#5e5e5e"/><rect x="569.3" y="253.2" width="3.6" height="3.6" fill="#5e5e5e"/>
<rect x="577.5" y="251.3" width="3.6" height="3.6" fill="#5e5e5e"/><rect x="579.3" y="253.2" width="3.6" height="3.6" fill="#5e5e5e"/>
<rect x="587.5" y="251.3" width="3.6" height="3.6" fill="#5e5e5e"/><rect x="589.3" y="253.2" width="3.6" height="3.6" fill="#5e5e5e"/>
<rect x="597.5" y="251.3" width="3.6" height="3.6" fill="#5e5e5e"/><rect x="599.3" y="253.2" width="3.6" height="3.6" fill="#5e5e5e"/>
<rect x="607.5" y="251.3" width="3.6" height="3.6" fill="#5e5e5e"/><rect x="609.3" y="253.2" width="3.6" height="3.6" fill="#5e5e5e"/>
<rect x="617.5" y="251.3" width="3.6" height="3.6" fill="#5e5e5e"/><rect x="619.3" y="253.2" width="3.6" height="3.6" fill="#5e5e5e"/>
<rect x="627.5" y="251.3" width="3.6" height="3.6" fill="#5e5e5e"/><rect x="629.3" y="253.2" width="3.6" height="3.6" fill="#5e5e5e"/>
<rect x="637.5" y="251.3" width="3.6" height="3.6" fill="#5e5e5e"/><rect x="639.3" y="253.2" width="3.6" height="3.6" fill="#5e5e5e"/>
<rect x="647.5" y="251.3" width="3.6" height="3.6" fill="#5e5e5e"/><rect x="649.3" y="253.2" width="3.6" height="3.6" fill="#5e5e5e"/>
<rect x="657.5" y="251.3" width="3.6" height="3.6" fill="#5e5e5e"/><rect x="659.3" y="253.2" width="3.6" height="3.6" fill="#5e5e5e"/>
<rect x="667.5" y="251.3" width="3.6" height="3.6" fill="#5e5e5e"/><rect x="669.3" y="253.2" width="3.6" height="3.6" fill="#5e5e5e"/>
<rect x="677.5" y="251.3" width="3.6" height="3.6" fill="#5e5e5e"/><rect x="679.3" y="253.2" width="3.6" height="3.6" fill="#5e5e5e"/>
<rect x="687.5" y="251.3" width="3.6" height="3.6" fill="#5e5e5e"/><rect x="689.3" y="253.2" width="3.6" height="3.6" fill="#5e5e5e"/>
<rect x="697.5" y="251.3" width="3.6" height="3.6" fill="#5e5e5e"/><rect x="699.3" y="253.2" width="3.6" height="3.6" fill="#5e5e5e"/>
<rect x="707.5" y="251.3" width="3.6" height="3.6" fill="#5e5e5e"/><rect x="709.3" y="253.2" width="3.6" height="3.6" fill="#5e5e5e"/>
<rect x="717.5" y="251.3" width="3.6" height="3.6" fill="#5e5e5e"/><rect x="719.3" y="253.2" width="3.6" height="3.6" fill="#5e5e5e"/>
<rect x="727.5" y="251.3" width="3.6" height="3.6" fill="#5e5e5e"/><rect x="729.3" y="253.2" width="3.6" height="3.6" fill="#5e5e5e"/>
<rect x="737.5" y="251.3" width="3.6" height="3.6" fill="#5e5e5e"/><rect x="739.3" y="253.2" width="3.6" height="3.6" fill="#5e5e5e"/>
<rect x="747.5" y="251.3" width="3.6" height="3.6" fill="#5e5e5e"/><rect x="749.3" y="253.2" width="3.6" height="3.6" fill="#5e5e5e"/>
<rect x="757.5" y="251.3" width="3.6" height="3.6" fill="#5e5e5e"/><rect x="759.3" y="253.2" width="3.6" height="3.6" fill="#5e5e5e"/>
<rect x="767.5" y="251.3" width="3.6" height="3.6" fill="#5e5e5e"/><rect x="769.3" y="253.2" width="3.6" height="3.6" fill="#5e5e5e"/>
<rect x="777.5" y="251.3" width="3.6" height="3.6" fill="#5e5e5e"/><rect x="779.3" y="253.2" width="3.6" height="3.6" fill="#5e5e5e"/>
<rect x="787.5" y="251.3" width="3.6" height="3.6" fill="#5e5e5e"/><rect x="789.3" y="253.2" width="3.6" height="3.6" fill="#5e5e5e"/>
<rect x="797.5" y="251.3" width="3.6" height="3.6" fill="#5e5e5e"/><rect x="799.3" y="253.2" width="3.6" height="3.6" fill="#5e5e5e"/>
<rect x="807.5" y="251.3" width="3.6" height="3.6" fill="#5e5e5e"/><rect x="809.3" y="253.2" width="3.6" height="3.6" fill="#5e5e5e"/>
<rect x="817.5" y="251.3" width="3.6" height="3.6" fill="#5e5e5e"/><rect x="819.3" y="253.2" width="3.6" height="3.6" fill="#5e5e5e"/>
<rect x="827.5" y="251.3" width="3.6" height="3.6" fill="#5e5e5e"/><rect x="829.3" y="253.2" width="3.6" height="3.6" fill="#5e5e5e"/>
<rect x="837.5" y="251.3" width="3.6" height="3.6" fill="#5e5e5e"/><rect x="839.3" y="253.2" width="3.6" height="3.6" fill="#5e5e5e"/>
<rect x="847.5" y="251.3" width="3.6" height="3.6" fill="#5e5e5e"/><rect x="849.3" y="253.2" width="3.6" height="3.6" fill="#5e5e5e"/>
<rect x="857.5" y="251.3" width="3.6" height="3.6" fill="#5e5e5e"/><rect x="859.3" y="253.2" width="3.6" height="3.6" fill="#5e5e5e"/>
<rect x="867.5" y="251.3" width="3.6" height="3.6" fill="#5e5e5e"/><rect x="869.3" y="253.2" width="3.6" height="3.6" fill="#5e5e5e"/>
<rect x="877.5" y="251.3" width="3.6" height="3.6" fill="#5e5e5e"/><rect x="879.3" y="253.2" width="3.6" height="3.6" fill="#5e5e5e"/>
<rect x="887.5" y="251.3" width="3.6" height="3.6" fill="#5e5e5e"/><rect x="889.3" y="253.2" width="3.6" height="3.6" fill="#5e5e5e"/>
<rect x="897.5" y="251.3" width="3.6" height="3.6" fill="#5e5e5e"/><rect x="899.3" y="253.2" width="3.6" height="3.6" fill="#5e5e5e"/>
<rect x="907.5" y="251.3" width="3.6" height="3.6" fill="#5e5e5e"/><rect x="909.3" y="253.2" width="3.6" height="3.6" fill="#5e5e5e"/>
<rect x="917.5" y="251.3" width="3.6" height="3.6" fill="#5e5e5e"/><rect x="919.3" y="253.2" width="3.6" height="3.6" fill="#5e5e5e"/>
<rect x="927.5" y="251.3" width="3.6" height="3.6" fill="#5e5e5e"/><rect x="929.3" y="253.2" width="3.6" height="3.6" fill="#5e5e5e"/>
<rect x="937.5" y="251.3" width="3.6" height="3.6" fill="#5e5e5e"/><rect x="939.3" y="253.2" width="3.6" height="3.6" fill="#5e5e5e"/>
<rect x="100" y="261.6" width="1284" height="1182" fill="#fbfbfb"/>
<rect x="102" y="264.3" width="1279" height="1176.7" fill="#f5f5f5"/>
<rect x="1384" y="246.8" width="2.2" height="1198" fill="#383838"/>
<rect x="96.5" y="246.8" width="3.5" height="1198" fill="#3b3b3b"/>
<rect x="100" y="1443.3" width="1284" height="1.4" fill="#9a9a9a"/>
<path d="M1484 1460 L1492 1452 M1488 1460 L1492 1456" stroke="#2a2a2a" stroke-width="1.5"/>
</svg>
<svg class="abs" style="left:0;top:0" width="1500" height="1461"><defs><clipPath id="cc"><rect x="102" y="264.3" width="1279" height="1176.7"/></clipPath></defs><g clip-path="url(#cc)">
<g><line x1="110.2" y1="258.6" x2="110.2" y2="319.6" stroke="#e4e4e4" stroke-width="2.6" stroke-linecap="butt"/>
<line x1="140.7" y1="258.6" x2="140.7" y2="319.6" stroke="#e4e4e4" stroke-width="2.6" stroke-linecap="butt"/>
<line x1="171.2" y1="258.6" x2="171.2" y2="319.6" stroke="#d4d4d4" stroke-width="3.2" stroke-linecap="butt"/>
<line x1="201.7" y1="258.6" x2="201.7" y2="319.6" stroke="#e4e4e4" stroke-width="2.6" stroke-linecap="butt"/>
<line x1="232.2" y1="258.6" x2="232.2" y2="319.6" stroke="#e4e4e4" stroke-width="2.6" stroke-linecap="butt"/>
<line x1="262.7" y1="258.6" x2="262.7" y2="319.6" stroke="#e4e4e4" stroke-width="2.6" stroke-linecap="butt"/>
<line x1="293.2" y1="258.6" x2="293.2" y2="319.6" stroke="#e4e4e4" stroke-width="2.6" stroke-linecap="butt"/>
<line x1="323.7" y1="258.6" x2="323.7" y2="319.6" stroke="#e4e4e4" stroke-width="2.6" stroke-linecap="butt"/>
<line x1="354.2" y1="258.6" x2="354.2" y2="319.6" stroke="#e4e4e4" stroke-width="2.6" stroke-linecap="butt"/>
<line x1="384.7" y1="258.6" x2="384.7" y2="319.6" stroke="#d4d4d4" stroke-width="3.2" stroke-linecap="butt"/>
<line x1="415.2" y1="258.6" x2="415.2" y2="319.6" stroke="#e4e4e4" stroke-width="2.6" stroke-linecap="butt"/>
<line x1="445.7" y1="258.6" x2="445.7" y2="319.6" stroke="#e4e4e4" stroke-width="2.6" stroke-linecap="butt"/>
<line x1="476.2" y1="258.6" x2="476.2" y2="319.6" stroke="#e4e4e4" stroke-width="2.6" stroke-linecap="butt"/>
<line x1="506.7" y1="258.6" x2="506.7" y2="319.6" stroke="#e4e4e4" stroke-width="2.6" stroke-linecap="butt"/>
<line x1="537.2" y1="258.6" x2="537.2" y2="319.6" stroke="#e4e4e4" stroke-width="2.6" stroke-linecap="butt"/>
<line x1="567.7" y1="258.6" x2="567.7" y2="319.6" stroke="#e4e4e4" stroke-width="2.6" stroke-linecap="butt"/>
<line x1="598.2" y1="258.6" x2="598.2" y2="319.6" stroke="#d4d4d4" stroke-width="3.2" stroke-linecap="butt"/>
<line x1="628.7" y1="258.6" x2="628.7" y2="319.6" stroke="#e4e4e4" stroke-width="2.6" stroke-linecap="butt"/>
<line x1="659.2" y1="258.6" x2="659.2" y2="319.6" stroke="#e4e4e4" stroke-width="2.6" stroke-linecap="butt"/>
<line x1="689.7" y1="258.6" x2="689.7" y2="319.6" stroke="#e4e4e4" stroke-width="2.6" stroke-linecap="butt"/>
<line x1="720.2" y1="258.6" x2="720.2" y2="319.6" stroke="#e4e4e4" stroke-width="2.6" stroke-linecap="butt"/>
<line x1="750.7" y1="258.6" x2="750.7" y2="319.6" stroke="#e4e4e4" stroke-width="2.6" stroke-linecap="butt"/>
<line x1="781.2" y1="258.6" x2="781.2" y2="319.6" stroke="#e4e4e4" stroke-width="2.6" stroke-linecap="butt"/>
<line x1="811.7" y1="258.6" x2="811.7" y2="319.6" stroke="#d4d4d4" stroke-width="3.2" stroke-linecap="butt"/>
<line x1="842.2" y1="258.6" x2="842.2" y2="319.6" stroke="#e4e4e4" stroke-width="2.6" stroke-linecap="butt"/>
<line x1="872.7" y1="258.6" x2="872.7" y2="319.6" stroke="#e4e4e4" stroke-width="2.6" stroke-linecap="butt"/>
<line x1="903.2" y1="258.6" x2="903.2" y2="319.6" stroke="#e4e4e4" stroke-width="2.6" stroke-linecap="butt"/>
<line x1="933.7" y1="258.6" x2="933.7" y2="319.6" stroke="#e4e4e4" stroke-width="2.6" stroke-linecap="butt"/>
<line x1="964.2" y1="258.6" x2="964.2" y2="319.6" stroke="#e4e4e4" stroke-width="2.6" stroke-linecap="butt"/>
<line x1="994.7" y1="258.6" x2="994.7" y2="319.6" stroke="#e4e4e4" stroke-width="2.6" stroke-linecap="butt"/>
<line x1="1025.2" y1="258.6" x2="1025.2" y2="319.6" stroke="#d4d4d4" stroke-width="3.2" stroke-linecap="butt"/>
<line x1="1055.7" y1="258.6" x2="1055.7" y2="319.6" stroke="#e4e4e4" stroke-width="2.6" stroke-linecap="butt"/>
<line x1="1086.2" y1="258.6" x2="1086.2" y2="319.6" stroke="#e4e4e4" stroke-width="2.6" stroke-linecap="butt"/>
<line x1="1116.7" y1="258.6" x2="1116.7" y2="319.6" stroke="#e4e4e4" stroke-width="2.6" stroke-linecap="butt"/>
<line x1="1147.2" y1="258.6" x2="1147.2" y2="319.6" stroke="#e4e4e4" stroke-width="2.6" stroke-linecap="butt"/>
<line x1="1177.7" y1="258.6" x2="1177.7" y2="319.6" stroke="#e4e4e4" stroke-width="2.6" stroke-linecap="butt"/>
<line x1="1208.2" y1="258.6" x2="1208.2" y2="319.6" stroke="#e4e4e4" stroke-width="2.6" stroke-linecap="butt"/>
<line x1="1238.7" y1="258.6" x2="1238.7" y2="319.6" stroke="#d4d4d4" stroke-width="3.2" stroke-linecap="butt"/>
<line x1="1269.2" y1="258.6" x2="1269.2" y2="319.6" stroke="#e4e4e4" stroke-width="2.6" stroke-linecap="butt"/>
<line x1="1299.7" y1="258.6" x2="1299.7" y2="319.6" stroke="#e4e4e4" stroke-width="2.6" stroke-linecap="butt"/>
<line x1="1330.2" y1="258.6" x2="1330.2" y2="319.6" stroke="#e4e4e4" stroke-width="2.6" stroke-linecap="butt"/>
<line x1="1360.7" y1="258.6" x2="1360.7" y2="319.6" stroke="#e4e4e4" stroke-width="2.6" stroke-linecap="butt"/>
<line x1="104" y1="258.6" x2="1380.5" y2="258.6" stroke="#dedede" stroke-width="2" stroke-linecap="butt"/>
<line x1="104" y1="289.1" x2="1380.5" y2="289.1" stroke="#e6e6e6" stroke-width="2" stroke-linecap="butt"/>
<line x1="104" y1="319.6" x2="1380.5" y2="319.6" stroke="#dedede" stroke-width="2" stroke-linecap="butt"/>
<line x1="110.2" y1="396.7" x2="110.2" y2="457.7" stroke="#e4e4e4" stroke-width="2.6" stroke-linecap="butt"/>
<line x1="140.7" y1="396.7" x2="140.7" y2="457.7" stroke="#e4e4e4" stroke-width="2.6" stroke-linecap="butt"/>
<line x1="171.2" y1="396.7" x2="171.2" y2="457.7" stroke="#d4d4d4" stroke-width="3.2" stroke-linecap="butt"/>
<line x1="201.7" y1="396.7" x2="201.7" y2="457.7" stroke="#e4e4e4" stroke-width="2.6" stroke-linecap="butt"/>
<line x1="232.2" y1="396.7" x2="232.2" y2="457.7" stroke="#e4e4e4" stroke-width="2.6" stroke-linecap="butt"/>
<line x1="262.7" y1="396.7" x2="262.7" y2="457.7" stroke="#e4e4e4" stroke-width="2.6" stroke-linecap="butt"/>
<line x1="293.2" y1="396.7" x2="293.2" y2="457.7" stroke="#e4e4e4" stroke-width="2.6" stroke-linecap="butt"/>
<line x1="323.7" y1="396.7" x2="323.7" y2="457.7" stroke="#e4e4e4" stroke-width="2.6" stroke-linecap="butt"/>
<line x1="354.2" y1="396.7" x2="354.2" y2="457.7" stroke="#e4e4e4" stroke-width="2.6" stroke-linecap="butt"/>
<line x1="384.7" y1="396.7" x2="384.7" y2="457.7" stroke="#d4d4d4" stroke-width="3.2" stroke-linecap="butt"/>
<line x1="415.2" y1="396.7" x2="415.2" y2="457.7" stroke="#e4e4e4" stroke-width="2.6" stroke-linecap="butt"/>
<line x1="445.7" y1="396.7" x2="445.7" y2="457.7" stroke="#e4e4e4" stroke-width="2.6" stroke-linecap="butt"/>
<line x1="476.2" y1="396.7" x2="476.2" y2="457.7" stroke="#e4e4e4" stroke-width="2.6" stroke-linecap="butt"/>
<line x1="506.7" y1="396.7" x2="506.7" y2="457.7" stroke="#e4e4e4" stroke-width="2.6" stroke-linecap="butt"/>
<line x1="537.2" y1="396.7" x2="537.2" y2="457.7" stroke="#e4e4e4" stroke-width="2.6" stroke-linecap="butt"/>
<line x1="567.7" y1="396.7" x2="567.7" y2="457.7" stroke="#e4e4e4" stroke-width="2.6" stroke-linecap="butt"/>
<line x1="598.2" y1="396.7" x2="598.2" y2="457.7" stroke="#d4d4d4" stroke-width="3.2" stroke-linecap="butt"/>
<line x1="628.7" y1="396.7" x2="628.7" y2="457.7" stroke="#e4e4e4" stroke-width="2.6" stroke-linecap="butt"/>
<line x1="659.2" y1="396.7" x2="659.2" y2="457.7" stroke="#e4e4e4" stroke-width="2.6" stroke-linecap="butt"/>
<line x1="689.7" y1="396.7" x2="689.7" y2="457.7" stroke="#e4e4e4" stroke-width="2.6" stroke-linecap="butt"/>
<line x1="720.2" y1="396.7" x2="720.2" y2="457.7" stroke="#e4e4e4" stroke-width="2.6" stroke-linecap="butt"/>
<line x1="750.7" y1="396.7" x2="750.7" y2="457.7" stroke="#e4e4e4" stroke-width="2.6" stroke-linecap="butt"/>
<line x1="781.2" y1="396.7" x2="781.2" y2="457.7" stroke="#e4e4e4" stroke-width="2.6" stroke-linecap="butt"/>
<line x1="811.7" y1="396.7" x2="811.7" y2="457.7" stroke="#d4d4d4" stroke-width="3.2" stroke-linecap="butt"/>
<line x1="842.2" y1="396.7" x2="842.2" y2="457.7" stroke="#e4e4e4" stroke-width="2.6" stroke-linecap="butt"/>
<line x1="872.7" y1="396.7" x2="872.7" y2="457.7" stroke="#e4e4e4" stroke-width="2.6" stroke-linecap="butt"/>
<line x1="903.2" y1="396.7" x2="903.2" y2="457.7" stroke="#e4e4e4" stroke-width="2.6" stroke-linecap="butt"/>
<line x1="933.7" y1="396.7" x2="933.7" y2="457.7" stroke="#e4e4e4" stroke-width="2.6" stroke-linecap="butt"/>
<line x1="964.2" y1="396.7" x2="964.2" y2="457.7" stroke="#e4e4e4" stroke-width="2.6" stroke-linecap="butt"/>
<line x1="994.7" y1="396.7" x2="994.7" y2="457.7" stroke="#e4e4e4" stroke-width="2.6" stroke-linecap="butt"/>
<line x1="1025.2" y1="396.7" x2="1025.2" y2="457.7" stroke="#d4d4d4" stroke-width="3.2" stroke-linecap="butt"/>
<line x1="1055.7" y1="396.7" x2="1055.7" y2="457.7" stroke="#e4e4e4" stroke-width="2.6" stroke-linecap="butt"/>
<line x1="1086.2" y1="396.7" x2="1086.2" y2="457.7" stroke="#e4e4e4" stroke-width="2.6" stroke-linecap="butt"/>
<line x1="1116.7" y1="396.7" x2="1116.7" y2="457.7" stroke="#e4e4e4" stroke-width="2.6" stroke-linecap="butt"/>
<line x1="1147.2" y1="396.7" x2="1147.2" y2="457.7" stroke="#e4e4e4" stroke-width="2.6" stroke-linecap="butt"/>
<line x1="1177.7" y1="396.7" x2="1177.7" y2="457.7" stroke="#e4e4e4" stroke-width="2.6" stroke-linecap="butt"/>
<line x1="1208.2" y1="396.7" x2="1208.2" y2="457.7" stroke="#e4e4e4" stroke-width="2.6" stroke-linecap="butt"/>
<line x1="1238.7" y1="396.7" x2="1238.7" y2="457.7" stroke="#d4d4d4" stroke-width="3.2" stroke-linecap="butt"/>
<line x1="1269.2" y1="396.7" x2="1269.2" y2="457.7" stroke="#e4e4e4" stroke-width="2.6" stroke-linecap="butt"/>
<line x1="1299.7" y1="396.7" x2="1299.7" y2="457.7" stroke="#e4e4e4" stroke-width="2.6" stroke-linecap="butt"/>
<line x1="1330.2" y1="396.7" x2="1330.2" y2="457.7" stroke="#e4e4e4" stroke-width="2.6" stroke-linecap="butt"/>
<line x1="1360.7" y1="396.7" x2="1360.7" y2="457.7" stroke="#e4e4e4" stroke-width="2.6" stroke-linecap="butt"/>
<line x1="104" y1="396.7" x2="1380.5" y2="396.7" stroke="#dedede" stroke-width="2" stroke-linecap="butt"/>
<line x1="104" y1="427.2" x2="1380.5" y2="427.2" stroke="#e6e6e6" stroke-width="2" stroke-linecap="butt"/>
<line x1="104" y1="457.7" x2="1380.5" y2="457.7" stroke="#dedede" stroke-width="2" stroke-linecap="butt"/>
<line x1="110.2" y1="534.8" x2="110.2" y2="595.8" stroke="#e4e4e4" stroke-width="2.6" stroke-linecap="butt"/>
<line x1="140.7" y1="534.8" x2="140.7" y2="595.8" stroke="#e4e4e4" stroke-width="2.6" stroke-linecap="butt"/>
<line x1="171.2" y1="534.8" x2="171.2" y2="595.8" stroke="#d4d4d4" stroke-width="3.2" stroke-linecap="butt"/>
<line x1="201.7" y1="534.8" x2="201.7" y2="595.8" stroke="#e4e4e4" stroke-width="2.6" stroke-linecap="butt"/>
<line x1="232.2" y1="534.8" x2="232.2" y2="595.8" stroke="#e4e4e4" stroke-width="2.6" stroke-linecap="butt"/>
<line x1="262.7" y1="534.8" x2="262.7" y2="595.8" stroke="#e4e4e4" stroke-width="2.6" stroke-linecap="butt"/>
<line x1="293.2" y1="534.8" x2="293.2" y2="595.8" stroke="#e4e4e4" stroke-width="2.6" stroke-linecap="butt"/>
<line x1="323.7" y1="534.8" x2="323.7" y2="595.8" stroke="#e4e4e4" stroke-width="2.6" stroke-linecap="butt"/>
<line x1="354.2" y1="534.8" x2="354.2" y2="595.8" stroke="#e4e4e4" stroke-width="2.6" stroke-linecap="butt"/>
<line x1="384.7" y1="534.8" x2="384.7" y2="595.8" stroke="#d4d4d4" stroke-width="3.2" stroke-linecap="butt"/>
<line x1="415.2" y1="534.8" x2="415.2" y2="595.8" stroke="#e4e4e4" stroke-width="2.6" stroke-linecap="butt"/>
<line x1="445.7" y1="534.8" x2="445.7" y2="595.8" stroke="#e4e4e4" stroke-width="2.6" stroke-linecap="butt"/>
<line x1="476.2" y1="534.8" x2="476.2" y2="595.8" stroke="#e4e4e4" stroke-width="2.6" stroke-linecap="butt"/>
<line x1="506.7" y1="534.8" x2="506.7" y2="595.8" stroke="#e4e4e4" stroke-width="2.6" stroke-linecap="butt"/>
<line x1="537.2" y1="534.8" x2="537.2" y2="595.8" stroke="#e4e4e4" stroke-width="2.6" stroke-linecap="butt"/>
<line x1="567.7" y1="534.8" x2="567.7" y2="595.8" stroke="#e4e4e4" stroke-width="2.6" stroke-linecap="butt"/>
<line x1="598.2" y1="534.8" x2="598.2" y2="595.8" stroke="#d4d4d4" stroke-width="3.2" stroke-linecap="butt"/>
<line x1="628.7" y1="534.8" x2="628.7" y2="595.8" stroke="#e4e4e4" stroke-width="2.6" stroke-linecap="butt"/>
<line x1="659.2" y1="534.8" x2="659.2" y2="595.8" stroke="#e4e4e4" stroke-width="2.6" stroke-linecap="butt"/>
<line x1="689.7" y1="534.8" x2="689.7" y2="595.8" stroke="#e4e4e4" stroke-width="2.6" stroke-linecap="butt"/>
<line x1="720.2" y1="534.8" x2="720.2" y2="595.8" stroke="#e4e4e4" stroke-width="2.6" stroke-linecap="butt"/>
<line x1="750.7" y1="534.8" x2="750.7" y2="595.8" stroke="#e4e4e4" stroke-width="2.6" stroke-linecap="butt"/>
<line x1="781.2" y1="534.8" x2="781.2" y2="595.8" stroke="#e4e4e4" stroke-width="2.6" stroke-linecap="butt"/>
<line x1="811.7" y1="534.8" x2="811.7" y2="595.8" stroke="#d4d4d4" stroke-width="3.2" stroke-linecap="butt"/>
<line x1="842.2" y1="534.8" x2="842.2" y2="595.8" stroke="#e4e4e4" stroke-width="2.6" stroke-linecap="butt"/>
<line x1="872.7" y1="534.8" x2="872.7" y2="595.8" stroke="#e4e4e4" stroke-width="2.6" stroke-linecap="butt"/>
<line x1="903.2" y1="534.8" x2="903.2" y2="595.8" stroke="#e4e4e4" stroke-width="2.6" stroke-linecap="butt"/>
<line x1="933.7" y1="534.8" x2="933.7" y2="595.8" stroke="#e4e4e4" stroke-width="2.6" stroke-linecap="butt"/>
<line x1="964.2" y1="534.8" x2="964.2" y2="595.8" stroke="#e4e4e4" stroke-width="2.6" stroke-linecap="butt"/>
<line x1="994.7" y1="534.8" x2="994.7" y2="595.8" stroke="#e4e4e4" stroke-width="2.6" stroke-linecap="butt"/>
<line x1="1025.2" y1="534.8" x2="1025.2" y2="595.8" stroke="#d4d4d4" stroke-width="3.2" stroke-linecap="butt"/>
<line x1="1055.7" y1="534.8" x2="1055.7" y2="595.8" stroke="#e4e4e4" stroke-width="2.6" stroke-linecap="butt"/>
<line x1="1086.2" y1="534.8" x2="1086.2" y2="595.8" stroke="#e4e4e4" stroke-width="2.6" stroke-linecap="butt"/>
<line x1="1116.7" y1="534.8" x2="1116.7" y2="595.8" stroke="#e4e4e4" stroke-width="2.6" stroke-linecap="butt"/>
<line x1="1147.2" y1="534.8" x2="1147.2" y2="595.8" stroke="#e4e4e4" stroke-width="2.6" stroke-linecap="butt"/>
<line x1="1177.7" y1="534.8" x2="1177.7" y2="595.8" stroke="#e4e4e4" stroke-width="2.6" stroke-linecap="butt"/>
<line x1="1208.2" y1="534.8" x2="1208.2" y2="595.8" stroke="#e4e4e4" stroke-width="2.6" stroke-linecap="butt"/>
<line x1="1238.7" y1="534.8" x2="1238.7" y2="595.8" stroke="#d4d4d4" stroke-width="3.2" stroke-linecap="butt"/>
<line x1="1269.2" y1="534.8" x2="1269.2" y2="595.8" stroke="#e4e4e4" stroke-width="2.6" stroke-linecap="butt"/>
<line x1="1299.7" y1="534.8" x2="1299.7" y2="595.8" stroke="#e4e4e4" stroke-width="2.6" stroke-linecap="butt"/>
<line x1="1330.2" y1="534.8" x2="1330.2" y2="595.8" stroke="#e4e4e4" stroke-width="2.6" stroke-linecap="butt"/>
<line x1="1360.7" y1="534.8" x2="1360.7" y2="595.8" stroke="#e4e4e4" stroke-width="2.6" stroke-linecap="butt"/>
<line x1="104" y1="534.8" x2="1380.5" y2="534.8" stroke="#dedede" stroke-width="2" stroke-linecap="butt"/>
<line x1="104" y1="565.3" x2="1380.5" y2="565.3" stroke="#e6e6e6" stroke-width="2" stroke-linecap="butt"/>
<line x1="104" y1="595.8" x2="1380.5" y2="595.8" stroke="#dedede" stroke-width="2" stroke-linecap="butt"/>
<line x1="110.2" y1="672.9" x2="110.2" y2="733.9" stroke="#e4e4e4" stroke-width="2.6" stroke-linecap="butt"/>
<line x1="140.7" y1="672.9" x2="140.7" y2="733.9" stroke="#e4e4e4" stroke-width="2.6" stroke-linecap="butt"/>
<line x1="171.2" y1="672.9" x2="171.2" y2="733.9" stroke="#d4d4d4" stroke-width="3.2" stroke-linecap="butt"/>
<line x1="201.7" y1="672.9" x2="201.7" y2="733.9" stroke="#e4e4e4" stroke-width="2.6" stroke-linecap="butt"/>
<line x1="232.2" y1="672.9" x2="232.2" y2="733.9" stroke="#e4e4e4" stroke-width="2.6" stroke-linecap="butt"/>
<line x1="262.7" y1="672.9" x2="262.7" y2="733.9" stroke="#e4e4e4" stroke-width="2.6" stroke-linecap="butt"/>
<line x1="293.2" y1="672.9" x2="293.2" y2="733.9" stroke="#e4e4e4" stroke-width="2.6" stroke-linecap="butt"/>
<line x1="323.7" y1="672.9" x2="323.7" y2="733.9" stroke="#e4e4e4" stroke-width="2.6" stroke-linecap="butt"/>
<line x1="354.2" y1="672.9" x2="354.2" y2="733.9" stroke="#e4e4e4" stroke-width="2.6" stroke-linecap="butt"/>
<line x1="384.7" y1="672.9" x2="384.7" y2="733.9" stroke="#d4d4d4" stroke-width="3.2" stroke-linecap="butt"/>
<line x1="415.2" y1="672.9" x2="415.2" y2="733.9" stroke="#e4e4e4" stroke-width="2.6" stroke-linecap="butt"/>
<line x1="445.7" y1="672.9" x2="445.7" y2="733.9" stroke="#e4e4e4" stroke-width="2.6" stroke-linecap="butt"/>
<line x1="476.2" y1="672.9" x2="476.2" y2="733.9" stroke="#e4e4e4" stroke-width="2.6" stroke-linecap="butt"/>
<line x1="506.7" y1="672.9" x2="506.7" y2="733.9" stroke="#e4e4e4" stroke-width="2.6" stroke-linecap="butt"/>
<line x1="537.2" y1="672.9" x2="537.2" y2="733.9" stroke="#e4e4e4" stroke-width="2.6" stroke-linecap="butt"/>
<line x1="567.7" y1="672.9" x2="567.7" y2="733.9" stroke="#e4e4e4" stroke-width="2.6" stroke-linecap="butt"/>
<line x1="598.2" y1="672.9" x2="598.2" y2="733.9" stroke="#d4d4d4" stroke-width="3.2" stroke-linecap="butt"/>
<line x1="628.7" y1="672.9" x2="628.7" y2="733.9" stroke="#e4e4e4" stroke-width="2.6" stroke-linecap="butt"/>
<line x1="659.2" y1="672.9" x2="659.2" y2="733.9" stroke="#e4e4e4" stroke-width="2.6" stroke-linecap="butt"/>
<line x1="689.7" y1="672.9" x2="689.7" y2="733.9" stroke="#e4e4e4" stroke-width="2.6" stroke-linecap="butt"/>
<line x1="720.2" y1="672.9" x2="720.2" y2="733.9" stroke="#e4e4e4" stroke-width="2.6" stroke-linecap="butt"/>
<line x1="750.7" y1="672.9" x2="750.7" y2="733.9" stroke="#e4e4e4" stroke-width="2.6" stroke-linecap="butt"/>
<line x1="781.2" y1="672.9" x2="781.2" y2="733.9" stroke="#e4e4e4" stroke-width="2.6" stroke-linecap="butt"/>
<line x1="811.7" y1="672.9" x2="811.7" y2="733.9" stroke="#d4d4d4" stroke-width="3.2" stroke-linecap="butt"/>
<line x1="842.2" y1="672.9" x2="842.2" y2="733.9" stroke="#e4e4e4" stroke-width="2.6" stroke-linecap="butt"/>
<line x1="872.7" y1="672.9" x2="872.7" y2="733.9" stroke="#e4e4e4" stroke-width="2.6" stroke-linecap="butt"/>
<line x1="903.2" y1="672.9" x2="903.2" y2="733.9" stroke="#e4e4e4" stroke-width="2.6" stroke-linecap="butt"/>
<line x1="933.7" y1="672.9" x2="933.7" y2="733.9" stroke="#e4e4e4" stroke-width="2.6" stroke-linecap="butt"/>
<line x1="964.2" y1="672.9" x2="964.2" y2="733.9" stroke="#e4e4e4" stroke-width="2.6" stroke-linecap="butt"/>
<line x1="994.7" y1="672.9" x2="994.7" y2="733.9" stroke="#e4e4e4" stroke-width="2.6" stroke-linecap="butt"/>
<line x1="1025.2" y1="672.9" x2="1025.2" y2="733.9" stroke="#d4d4d4" stroke-width="3.2" stroke-linecap="butt"/>
<line x1="1055.7" y1="672.9" x2="1055.7" y2="733.9" stroke="#e4e4e4" stroke-width="2.6" stroke-linecap="butt"/>
<line x1="1086.2" y1="672.9" x2="1086.2" y2="733.9" stroke="#e4e4e4" stroke-width="2.6" stroke-linecap="butt"/>
<line x1="1116.7" y1="672.9" x2="1116.7" y2="733.9" stroke="#e4e4e4" stroke-width="2.6" stroke-linecap="butt"/>
<line x1="1147.2" y1="672.9" x2="1147.2" y2="733.9" stroke="#e4e4e4" stroke-width="2.6" stroke-linecap="butt"/>
<line x1="1177.7" y1="672.9" x2="1177.7" y2="733.9" stroke="#e4e4e4" stroke-width="2.6" stroke-linecap="butt"/>
<line x1="1208.2" y1="672.9" x2="1208.2" y2="733.9" stroke="#e4e4e4" stroke-width="2.6" stroke-linecap="butt"/>
<line x1="1238.7" y1="672.9" x2="1238.7" y2="733.9" stroke="#d4d4d4" stroke-width="3.2" stroke-linecap="butt"/>
<line x1="1269.2" y1="672.9" x2="1269.2" y2="733.9" stroke="#e4e4e4" stroke-width="2.6" stroke-linecap="butt"/>
<line x1="1299.7" y1="672.9" x2="1299.7" y2="733.9" stroke="#e4e4e4" stroke-width="2.6" stroke-linecap="butt"/>
<line x1="1330.2" y1="672.9" x2="1330.2" y2="733.9" stroke="#e4e4e4" stroke-width="2.6" stroke-linecap="butt"/>
<line x1="1360.7" y1="672.9" x2="1360.7" y2="733.9" stroke="#e4e4e4" stroke-width="2.6" stroke-linecap="butt"/>
<line x1="104" y1="672.9" x2="1380.5" y2="672.9" stroke="#dedede" stroke-width="2" stroke-linecap="butt"/>
<line x1="104" y1="703.4" x2="1380.5" y2="703.4" stroke="#e6e6e6" stroke-width="2" stroke-linecap="butt"/>
<line x1="104" y1="733.9" x2="1380.5" y2="733.9" stroke="#dedede" stroke-width="2" stroke-linecap="butt"/>
<line x1="110.2" y1="811" x2="110.2" y2="872" stroke="#e4e4e4" stroke-width="2.6" stroke-linecap="butt"/>
<line x1="140.7" y1="811" x2="140.7" y2="872" stroke="#e4e4e4" stroke-width="2.6" stroke-linecap="butt"/>
<line x1="171.2" y1="811" x2="171.2" y2="872" stroke="#d4d4d4" stroke-width="3.2" stroke-linecap="butt"/>
<line x1="201.7" y1="811" x2="201.7" y2="872" stroke="#e4e4e4" stroke-width="2.6" stroke-linecap="butt"/>
<line x1="232.2" y1="811" x2="232.2" y2="872" stroke="#e4e4e4" stroke-width="2.6" stroke-linecap="butt"/>
<line x1="262.7" y1="811" x2="262.7" y2="872" stroke="#e4e4e4" stroke-width="2.6" stroke-linecap="butt"/>
<line x1="293.2" y1="811" x2="293.2" y2="872" stroke="#e4e4e4" stroke-width="2.6" stroke-linecap="butt"/>
<line x1="323.7" y1="811" x2="323.7" y2="872" stroke="#e4e4e4" stroke-width="2.6" stroke-linecap="butt"/>
<line x1="354.2" y1="811" x2="354.2" y2="872" stroke="#e4e4e4" stroke-width="2.6" stroke-linecap="butt"/>
<line x1="384.7" y1="811" x2="384.7" y2="872" stroke="#d4d4d4" stroke-width="3.2" stroke-linecap="butt"/>
<line x1="415.2" y1="811" x2="415.2" y2="872" stroke="#e4e4e4" stroke-width="2.6" stroke-linecap="butt"/>
<line x1="445.7" y1="811" x2="445.7" y2="872" stroke="#e4e4e4" stroke-width="2.6" stroke-linecap="butt"/>
<line x1="476.2" y1="811" x2="476.2" y2="872" stroke="#e4e4e4" stroke-width="2.6" stroke-linecap="butt"/>
<line x1="506.7" y1="811" x2="506.7" y2="872" stroke="#e4e4e4" stroke-width="2.6" stroke-linecap="butt"/>
<line x1="537.2" y1="811" x2="537.2" y2="872" stroke="#e4e4e4" stroke-width="2.6" stroke-linecap="butt"/>
<line x1="567.7" y1="811" x2="567.7" y2="872" stroke="#e4e4e4" stroke-width="2.6" stroke-linecap="butt"/>
<line x1="598.2" y1="811" x2="598.2" y2="872" stroke="#d4d4d4" stroke-width="3.2" stroke-linecap="butt"/>
<line x1="628.7" y1="811" x2="628.7" y2="872" stroke="#e4e4e4" stroke-width="2.6" stroke-linecap="butt"/>
<line x1="659.2" y1="811" x2="659.2" y2="872" stroke="#e4e4e4" stroke-width="2.6" stroke-linecap="butt"/>
<line x1="689.7" y1="811" x2="689.7" y2="872" stroke="#e4e4e4" stroke-width="2.6" stroke-linecap="butt"/>
<line x1="720.2" y1="811" x2="720.2" y2="872" stroke="#e4e4e4" stroke-width="2.6" stroke-linecap="butt"/>
<line x1="750.7" y1="811" x2="750.7" y2="872" stroke="#e4e4e4" stroke-width="2.6" stroke-linecap="butt"/>
<line x1="781.2" y1="811" x2="781.2" y2="872" stroke="#e4e4e4" stroke-width="2.6" stroke-linecap="butt"/>
<line x1="811.7" y1="811" x2="811.7" y2="872" stroke="#d4d4d4" stroke-width="3.2" stroke-linecap="butt"/>
<line x1="842.2" y1="811" x2="842.2" y2="872" stroke="#e4e4e4" stroke-width="2.6" stroke-linecap="butt"/>
<line x1="872.7" y1="811" x2="872.7" y2="872" stroke="#e4e4e4" stroke-width="2.6" stroke-linecap="butt"/>
<line x1="903.2" y1="811" x2="903.2" y2="872" stroke="#e4e4e4" stroke-width="2.6" stroke-linecap="butt"/>
<line x1="933.7" y1="811" x2="933.7" y2="872" stroke="#e4e4e4" stroke-width="2.6" stroke-linecap="butt"/>
<line x1="964.2" y1="811" x2="964.2" y2="872" stroke="#e4e4e4" stroke-width="2.6" stroke-linecap="butt"/>
<line x1="994.7" y1="811" x2="994.7" y2="872" stroke="#e4e4e4" stroke-width="2.6" stroke-linecap="butt"/>
<line x1="1025.2" y1="811" x2="1025.2" y2="872" stroke="#d4d4d4" stroke-width="3.2" stroke-linecap="butt"/>
<line x1="1055.7" y1="811" x2="1055.7" y2="872" stroke="#e4e4e4" stroke-width="2.6" stroke-linecap="butt"/>
<line x1="1086.2" y1="811" x2="1086.2" y2="872" stroke="#e4e4e4" stroke-width="2.6" stroke-linecap="butt"/>
<line x1="1116.7" y1="811" x2="1116.7" y2="872" stroke="#e4e4e4" stroke-width="2.6" stroke-linecap="butt"/>
<line x1="1147.2" y1="811" x2="1147.2" y2="872" stroke="#e4e4e4" stroke-width="2.6" stroke-linecap="butt"/>
<line x1="1177.7" y1="811" x2="1177.7" y2="872" stroke="#e4e4e4" stroke-width="2.6" stroke-linecap="butt"/>
<line x1="1208.2" y1="811" x2="1208.2" y2="872" stroke="#e4e4e4" stroke-width="2.6" stroke-linecap="butt"/>
<line x1="1238.7" y1="811" x2="1238.7" y2="872" stroke="#d4d4d4" stroke-width="3.2" stroke-linecap="butt"/>
<line x1="1269.2" y1="811" x2="1269.2" y2="872" stroke="#e4e4e4" stroke-width="2.6" stroke-linecap="butt"/>
<line x1="1299.7" y1="811" x2="1299.7" y2="872" stroke="#e4e4e4" stroke-width="2.6" stroke-linecap="butt"/>
<line x1="1330.2" y1="811" x2="1330.2" y2="872" stroke="#e4e4e4" stroke-width="2.6" stroke-linecap="butt"/>
<line x1="1360.7" y1="811" x2="1360.7" y2="872" stroke="#e4e4e4" stroke-width="2.6" stroke-linecap="butt"/>
<line x1="104" y1="811" x2="1380.5" y2="811" stroke="#dedede" stroke-width="2" stroke-linecap="butt"/>
<line x1="104" y1="841.5" x2="1380.5" y2="841.5" stroke="#e6e6e6" stroke-width="2" stroke-linecap="butt"/>
<line x1="104" y1="872" x2="1380.5" y2="872" stroke="#dedede" stroke-width="2" stroke-linecap="butt"/>
<line x1="110.2" y1="949.1" x2="110.2" y2="1010.1" stroke="#e4e4e4" stroke-width="2.6" stroke-linecap="butt"/>
<line x1="140.7" y1="949.1" x2="140.7" y2="1010.1" stroke="#e4e4e4" stroke-width="2.6" stroke-linecap="butt"/>
<line x1="171.2" y1="949.1" x2="171.2" y2="1010.1" stroke="#d4d4d4" stroke-width="3.2" stroke-linecap="butt"/>
<line x1="201.7" y1="949.1" x2="201.7" y2="1010.1" stroke="#e4e4e4" stroke-width="2.6" stroke-linecap="butt"/>
<line x1="232.2" y1="949.1" x2="232.2" y2="1010.1" stroke="#e4e4e4" stroke-width="2.6" stroke-linecap="butt"/>
<line x1="262.7" y1="949.1" x2="262.7" y2="1010.1" stroke="#e4e4e4" stroke-width="2.6" stroke-linecap="butt"/>
<line x1="293.2" y1="949.1" x2="293.2" y2="1010.1" stroke="#e4e4e4" stroke-width="2.6" stroke-linecap="butt"/>
<line x1="323.7" y1="949.1" x2="323.7" y2="1010.1" stroke="#e4e4e4" stroke-width="2.6" stroke-linecap="butt"/>
<line x1="354.2" y1="949.1" x2="354.2" y2="1010.1" stroke="#e4e4e4" stroke-width="2.6" stroke-linecap="butt"/>
<line x1="384.7" y1="949.1" x2="384.7" y2="1010.1" stroke="#d4d4d4" stroke-width="3.2" stroke-linecap="butt"/>
<line x1="415.2" y1="949.1" x2="415.2" y2="1010.1" stroke="#e4e4e4" stroke-width="2.6" stroke-linecap="butt"/>
<line x1="445.7" y1="949.1" x2="445.7" y2="1010.1" stroke="#e4e4e4" stroke-width="2.6" stroke-linecap="butt"/>
<line x1="476.2" y1="949.1" x2="476.2" y2="1010.1" stroke="#e4e4e4" stroke-width="2.6" stroke-linecap="butt"/>
<line x1="506.7" y1="949.1" x2="506.7" y2="1010.1" stroke="#e4e4e4" stroke-width="2.6" stroke-linecap="butt"/>
<line x1="537.2" y1="949.1" x2="537.2" y2="1010.1" stroke="#e4e4e4" stroke-width="2.6" stroke-linecap="butt"/>
<line x1="567.7" y1="949.1" x2="567.7" y2="1010.1" stroke="#e4e4e4" stroke-width="2.6" stroke-linecap="butt"/>
<line x1="598.2" y1="949.1" x2="598.2" y2="1010.1" stroke="#d4d4d4" stroke-width="3.2" stroke-linecap="butt"/>
<line x1="628.7" y1="949.1" x2="628.7" y2="1010.1" stroke="#e4e4e4" stroke-width="2.6" stroke-linecap="butt"/>
<line x1="659.2" y1="949.1" x2="659.2" y2="1010.1" stroke="#e4e4e4" stroke-width="2.6" stroke-linecap="butt"/>
<line x1="689.7" y1="949.1" x2="689.7" y2="1010.1" stroke="#e4e4e4" stroke-width="2.6" stroke-linecap="butt"/>
<line x1="720.2" y1="949.1" x2="720.2" y2="1010.1" stroke="#e4e4e4" stroke-width="2.6" stroke-linecap="butt"/>
<line x1="750.7" y1="949.1" x2="750.7" y2="1010.1" stroke="#e4e4e4" stroke-width="2.6" stroke-linecap="butt"/>
<line x1="781.2" y1="949.1" x2="781.2" y2="1010.1" stroke="#e4e4e4" stroke-width="2.6" stroke-linecap="butt"/>
<line x1="811.7" y1="949.1" x2="811.7" y2="1010.1" stroke="#d4d4d4" stroke-width="3.2" stroke-linecap="butt"/>
<line x1="842.2" y1="949.1" x2="842.2" y2="1010.1" stroke="#e4e4e4" stroke-width="2.6" stroke-linecap="butt"/>
<line x1="872.7" y1="949.1" x2="872.7" y2="1010.1" stroke="#e4e4e4" stroke-width="2.6" stroke-linecap="butt"/>
<line x1="903.2" y1="949.1" x2="903.2" y2="1010.1" stroke="#e4e4e4" stroke-width="2.6" stroke-linecap="butt"/>
<line x1="933.7" y1="949.1" x2="933.7" y2="1010.1" stroke="#e4e4e4" stroke-width="2.6" stroke-linecap="butt"/>
<line x1="964.2" y1="949.1" x2="964.2" y2="1010.1" stroke="#e4e4e4" stroke-width="2.6" stroke-linecap="butt"/>
<line x1="994.7" y1="949.1" x2="994.7" y2="1010.1" stroke="#e4e4e4" stroke-width="2.6" stroke-linecap="butt"/>
<line x1="1025.2" y1="949.1" x2="1025.2" y2="1010.1" stroke="#d4d4d4" stroke-width="3.2" stroke-linecap="butt"/>
<line x1="1055.7" y1="949.1" x2="1055.7" y2="1010.1" stroke="#e4e4e4" stroke-width="2.6" stroke-linecap="butt"/>
<line x1="1086.2" y1="949.1" x2="1086.2" y2="1010.1" stroke="#e4e4e4" stroke-width="2.6" stroke-linecap="butt"/>
<line x1="1116.7" y1="949.1" x2="1116.7" y2="1010.1" stroke="#e4e4e4" stroke-width="2.6" stroke-linecap="butt"/>
<line x1="1147.2" y1="949.1" x2="1147.2" y2="1010.1" stroke="#e4e4e4" stroke-width="2.6" stroke-linecap="butt"/>
<line x1="1177.7" y1="949.1" x2="1177.7" y2="1010.1" stroke="#e4e4e4" stroke-width="2.6" stroke-linecap="butt"/>
<line x1="1208.2" y1="949.1" x2="1208.2" y2="1010.1" stroke="#e4e4e4" stroke-width="2.6" stroke-linecap="butt"/>
<line x1="1238.7" y1="949.1" x2="1238.7" y2="1010.1" stroke="#d4d4d4" stroke-width="3.2" stroke-linecap="butt"/>
<line x1="1269.2" y1="949.1" x2="1269.2" y2="1010.1" stroke="#e4e4e4" stroke-width="2.6" stroke-linecap="butt"/>
<line x1="1299.7" y1="949.1" x2="1299.7" y2="1010.1" stroke="#e4e4e4" stroke-width="2.6" stroke-linecap="butt"/>
<line x1="1330.2" y1="949.1" x2="1330.2" y2="1010.1" stroke="#e4e4e4" stroke-width="2.6" stroke-linecap="butt"/>
<line x1="1360.7" y1="949.1" x2="1360.7" y2="1010.1" stroke="#e4e4e4" stroke-width="2.6" stroke-linecap="butt"/>
<line x1="104" y1="949.1" x2="1380.5" y2="949.1" stroke="#dedede" stroke-width="2" stroke-linecap="butt"/>
<line x1="104" y1="979.6" x2="1380.5" y2="979.6" stroke="#e6e6e6" stroke-width="2" stroke-linecap="butt"/>
<line x1="104" y1="1010.1" x2="1380.5" y2="1010.1" stroke="#dedede" stroke-width="2" stroke-linecap="butt"/>
<line x1="110.2" y1="1087.2" x2="110.2" y2="1148.2" stroke="#e4e4e4" stroke-width="2.6" stroke-linecap="butt"/>
<line x1="140.7" y1="1087.2" x2="140.7" y2="1148.2" stroke="#e4e4e4" stroke-width="2.6" stroke-linecap="butt"/>
<line x1="171.2" y1="1087.2" x2="171.2" y2="1148.2" stroke="#d4d4d4" stroke-width="3.2" stroke-linecap="butt"/>
<line x1="201.7" y1="1087.2" x2="201.7" y2="1148.2" stroke="#e4e4e4" stroke-width="2.6" stroke-linecap="butt"/>
<line x1="232.2" y1="1087.2" x2="232.2" y2="1148.2" stroke="#e4e4e4" stroke-width="2.6" stroke-linecap="butt"/>
<line x1="262.7" y1="1087.2" x2="262.7" y2="1148.2" stroke="#e4e4e4" stroke-width="2.6" stroke-linecap="butt"/>
<line x1="293.2" y1="1087.2" x2="293.2" y2="1148.2" stroke="#e4e4e4" stroke-width="2.6" stroke-linecap="butt"/>
<line x1="323.7" y1="1087.2" x2="323.7" y2="1148.2" stroke="#e4e4e4" stroke-width="2.6" stroke-linecap="butt"/>
<line x1="354.2" y1="1087.2" x2="354.2" y2="1148.2" stroke="#e4e4e4" stroke-width="2.6" stroke-linecap="butt"/>
<line x1="384.7" y1="1087.2" x2="384.7" y2="1148.2" stroke="#d4d4d4" stroke-width="3.2" stroke-linecap="butt"/>
<line x1="415.2" y1="1087.2" x2="415.2" y2="1148.2" stroke="#e4e4e4" stroke-width="2.6" stroke-linecap="butt"/>
<line x1="445.7" y1="1087.2" x2="445.7" y2="1148.2" stroke="#e4e4e4" stroke-width="2.6" stroke-linecap="butt"/>
<line x1="476.2" y1="1087.2" x2="476.2" y2="1148.2" stroke="#e4e4e4" stroke-width="2.6" stroke-linecap="butt"/>
<line x1="506.7" y1="1087.2" x2="506.7" y2="1148.2" stroke="#e4e4e4" stroke-width="2.6" stroke-linecap="butt"/>
<line x1="537.2" y1="1087.2" x2="537.2" y2="1148.2" stroke="#e4e4e4" stroke-width="2.6" stroke-linecap="butt"/>
<line x1="567.7" y1="1087.2" x2="567.7" y2="1148.2" stroke="#e4e4e4" stroke-width="2.6" stroke-linecap="butt"/>
<line x1="598.2" y1="1087.2" x2="598.2" y2="1148.2" stroke="#d4d4d4" stroke-width="3.2" stroke-linecap="butt"/>
<line x1="628.7" y1="1087.2" x2="628.7" y2="1148.2" stroke="#e4e4e4" stroke-width="2.6" stroke-linecap="butt"/>
<line x1="659.2" y1="1087.2" x2="659.2" y2="1148.2" stroke="#e4e4e4" stroke-width="2.6" stroke-linecap="butt"/>
<line x1="689.7" y1="1087.2" x2="689.7" y2="1148.2" stroke="#e4e4e4" stroke-width="2.6" stroke-linecap="butt"/>
<line x1="720.2" y1="1087.2" x2="720.2" y2="1148.2" stroke="#e4e4e4" stroke-width="2.6" stroke-linecap="butt"/>
<line x1="750.7" y1="1087.2" x2="750.7" y2="1148.2" stroke="#e4e4e4" stroke-width="2.6" stroke-linecap="butt"/>
<line x1="781.2" y1="1087.2" x2="781.2" y2="1148.2" stroke="#e4e4e4" stroke-width="2.6" stroke-linecap="butt"/>
<line x1="811.7" y1="1087.2" x2="811.7" y2="1148.2" stroke="#d4d4d4" stroke-width="3.2" stroke-linecap="butt"/>
<line x1="842.2" y1="1087.2" x2="842.2" y2="1148.2" stroke="#e4e4e4" stroke-width="2.6" stroke-linecap="butt"/>
<line x1="872.7" y1="1087.2" x2="872.7" y2="1148.2" stroke="#e4e4e4" stroke-width="2.6" stroke-linecap="butt"/>
<line x1="903.2" y1="1087.2" x2="903.2" y2="1148.2" stroke="#e4e4e4" stroke-width="2.6" stroke-linecap="butt"/>
<line x1="933.7" y1="1087.2" x2="933.7" y2="1148.2" stroke="#e4e4e4" stroke-width="2.6" stroke-linecap="butt"/>
<line x1="964.2" y1="1087.2" x2="964.2" y2="1148.2" stroke="#e4e4e4" stroke-width="2.6" stroke-linecap="butt"/>
<line x1="994.7" y1="1087.2" x2="994.7" y2="1148.2" stroke="#e4e4e4" stroke-width="2.6" stroke-linecap="butt"/>
<line x1="1025.2" y1="1087.2" x2="1025.2" y2="1148.2" stroke="#d4d4d4" stroke-width="3.2" stroke-linecap="butt"/>
<line x1="1055.7" y1="1087.2" x2="1055.7" y2="1148.2" stroke="#e4e4e4" stroke-width="2.6" stroke-linecap="butt"/>
<line x1="1086.2" y1="1087.2" x2="1086.2" y2="1148.2" stroke="#e4e4e4" stroke-width="2.6" stroke-linecap="butt"/>
<line x1="1116.7" y1="1087.2" x2="1116.7" y2="1148.2" stroke="#e4e4e4" stroke-width="2.6" stroke-linecap="butt"/>
<line x1="1147.2" y1="1087.2" x2="1147.2" y2="1148.2" stroke="#e4e4e4" stroke-width="2.6" stroke-linecap="butt"/>
<line x1="1177.7" y1="1087.2" x2="1177.7" y2="1148.2" stroke="#e4e4e4" stroke-width="2.6" stroke-linecap="butt"/>
<line x1="1208.2" y1="1087.2" x2="1208.2" y2="1148.2" stroke="#e4e4e4" stroke-width="2.6" stroke-linecap="butt"/>
<line x1="1238.7" y1="1087.2" x2="1238.7" y2="1148.2" stroke="#d4d4d4" stroke-width="3.2" stroke-linecap="butt"/>
<line x1="1269.2" y1="1087.2" x2="1269.2" y2="1148.2" stroke="#e4e4e4" stroke-width="2.6" stroke-linecap="butt"/>
<line x1="1299.7" y1="1087.2" x2="1299.7" y2="1148.2" stroke="#e4e4e4" stroke-width="2.6" stroke-linecap="butt"/>
<line x1="1330.2" y1="1087.2" x2="1330.2" y2="1148.2" stroke="#e4e4e4" stroke-width="2.6" stroke-linecap="butt"/>
<line x1="1360.7" y1="1087.2" x2="1360.7" y2="1148.2" stroke="#e4e4e4" stroke-width="2.6" stroke-linecap="butt"/>
<line x1="104" y1="1087.2" x2="1380.5" y2="1087.2" stroke="#dedede" stroke-width="2" stroke-linecap="butt"/>
<line x1="104" y1="1117.7" x2="1380.5" y2="1117.7" stroke="#e6e6e6" stroke-width="2" stroke-linecap="butt"/>
<line x1="104" y1="1148.2" x2="1380.5" y2="1148.2" stroke="#dedede" stroke-width="2" stroke-linecap="butt"/>
<line x1="110.2" y1="1225.3" x2="110.2" y2="1286.3" stroke="#e4e4e4" stroke-width="2.6" stroke-linecap="butt"/>
<line x1="140.7" y1="1225.3" x2="140.7" y2="1286.3" stroke="#e4e4e4" stroke-width="2.6" stroke-linecap="butt"/>
<line x1="171.2" y1="1225.3" x2="171.2" y2="1286.3" stroke="#d4d4d4" stroke-width="3.2" stroke-linecap="butt"/>
<line x1="201.7" y1="1225.3" x2="201.7" y2="1286.3" stroke="#e4e4e4" stroke-width="2.6" stroke-linecap="butt"/>
<line x1="232.2" y1="1225.3" x2="232.2" y2="1286.3" stroke="#e4e4e4" stroke-width="2.6" stroke-linecap="butt"/>
<line x1="262.7" y1="1225.3" x2="262.7" y2="1286.3" stroke="#e4e4e4" stroke-width="2.6" stroke-linecap="butt"/>
<line x1="293.2" y1="1225.3" x2="293.2" y2="1286.3" stroke="#e4e4e4" stroke-width="2.6" stroke-linecap="butt"/>
<line x1="323.7" y1="1225.3" x2="323.7" y2="1286.3" stroke="#e4e4e4" stroke-width="2.6" stroke-linecap="butt"/>
<line x1="354.2" y1="1225.3" x2="354.2" y2="1286.3" stroke="#e4e4e4" stroke-width="2.6" stroke-linecap="butt"/>
<line x1="384.7" y1="1225.3" x2="384.7" y2="1286.3" stroke="#d4d4d4" stroke-width="3.2" stroke-linecap="butt"/>
<line x1="415.2" y1="1225.3" x2="415.2" y2="1286.3" stroke="#e4e4e4" stroke-width="2.6" stroke-linecap="butt"/>
<line x1="445.7" y1="1225.3" x2="445.7" y2="1286.3" stroke="#e4e4e4" stroke-width="2.6" stroke-linecap="butt"/>
<line x1="476.2" y1="1225.3" x2="476.2" y2="1286.3" stroke="#e4e4e4" stroke-width="2.6" stroke-linecap="butt"/>
<line x1="506.7" y1="1225.3" x2="506.7" y2="1286.3" stroke="#e4e4e4" stroke-width="2.6" stroke-linecap="butt"/>
<line x1="537.2" y1="1225.3" x2="537.2" y2="1286.3" stroke="#e4e4e4" stroke-width="2.6" stroke-linecap="butt"/>
<line x1="567.7" y1="1225.3" x2="567.7" y2="1286.3" stroke="#e4e4e4" stroke-width="2.6" stroke-linecap="butt"/>
<line x1="598.2" y1="1225.3" x2="598.2" y2="1286.3" stroke="#d4d4d4" stroke-width="3.2" stroke-linecap="butt"/>
<line x1="628.7" y1="1225.3" x2="628.7" y2="1286.3" stroke="#e4e4e4" stroke-width="2.6" stroke-linecap="butt"/>
<line x1="659.2" y1="1225.3" x2="659.2" y2="1286.3" stroke="#e4e4e4" stroke-width="2.6" stroke-linecap="butt"/>
<line x1="689.7" y1="1225.3" x2="689.7" y2="1286.3" stroke="#e4e4e4" stroke-width="2.6" stroke-linecap="butt"/>
<line x1="720.2" y1="1225.3" x2="720.2" y2="1286.3" stroke="#e4e4e4" stroke-width="2.6" stroke-linecap="butt"/>
<line x1="750.7" y1="1225.3" x2="750.7" y2="1286.3" stroke="#e4e4e4" stroke-width="2.6" stroke-linecap="butt"/>
<line x1="781.2" y1="1225.3" x2="781.2" y2="1286.3" stroke="#e4e4e4" stroke-width="2.6" stroke-linecap="butt"/>
<line x1="811.7" y1="1225.3" x2="811.7" y2="1286.3" stroke="#d4d4d4" stroke-width="3.2" stroke-linecap="butt"/>
<line x1="842.2" y1="1225.3" x2="842.2" y2="1286.3" stroke="#e4e4e4" stroke-width="2.6" stroke-linecap="butt"/>
<line x1="872.7" y1="1225.3" x2="872.7" y2="1286.3" stroke="#e4e4e4" stroke-width="2.6" stroke-linecap="butt"/>
<line x1="903.2" y1="1225.3" x2="903.2" y2="1286.3" stroke="#e4e4e4" stroke-width="2.6" stroke-linecap="butt"/>
<line x1="933.7" y1="1225.3" x2="933.7" y2="1286.3" stroke="#e4e4e4" stroke-width="2.6" stroke-linecap="butt"/>
<line x1="964.2" y1="1225.3" x2="964.2" y2="1286.3" stroke="#e4e4e4" stroke-width="2.6" stroke-linecap="butt"/>
<line x1="994.7" y1="1225.3" x2="994.7" y2="1286.3" stroke="#e4e4e4" stroke-width="2.6" stroke-linecap="butt"/>
<line x1="1025.2" y1="1225.3" x2="1025.2" y2="1286.3" stroke="#d4d4d4" stroke-width="3.2" stroke-linecap="butt"/>
<line x1="1055.7" y1="1225.3" x2="1055.7" y2="1286.3" stroke="#e4e4e4" stroke-width="2.6" stroke-linecap="butt"/>
<line x1="1086.2" y1="1225.3" x2="1086.2" y2="1286.3" stroke="#e4e4e4" stroke-width="2.6" stroke-linecap="butt"/>
<line x1="1116.7" y1="1225.3" x2="1116.7" y2="1286.3" stroke="#e4e4e4" stroke-width="2.6" stroke-linecap="butt"/>
<line x1="1147.2" y1="1225.3" x2="1147.2" y2="1286.3" stroke="#e4e4e4" stroke-width="2.6" stroke-linecap="butt"/>
<line x1="1177.7" y1="1225.3" x2="1177.7" y2="1286.3" stroke="#e4e4e4" stroke-width="2.6" stroke-linecap="butt"/>
<line x1="1208.2" y1="1225.3" x2="1208.2" y2="1286.3" stroke="#e4e4e4" stroke-width="2.6" stroke-linecap="butt"/>
<line x1="1238.7" y1="1225.3" x2="1238.7" y2="1286.3" stroke="#d4d4d4" stroke-width="3.2" stroke-linecap="butt"/>
<line x1="1269.2" y1="1225.3" x2="1269.2" y2="1286.3" stroke="#e4e4e4" stroke-width="2.6" stroke-linecap="butt"/>
<line x1="1299.7" y1="1225.3" x2="1299.7" y2="1286.3" stroke="#e4e4e4" stroke-width="2.6" stroke-linecap="butt"/>
<line x1="1330.2" y1="1225.3" x2="1330.2" y2="1286.3" stroke="#e4e4e4" stroke-width="2.6" stroke-linecap="butt"/>
<line x1="1360.7" y1="1225.3" x2="1360.7" y2="1286.3" stroke="#e4e4e4" stroke-width="2.6" stroke-linecap="butt"/>
<line x1="104" y1="1225.3" x2="1380.5" y2="1225.3" stroke="#dedede" stroke-width="2" stroke-linecap="butt"/>
<line x1="104" y1="1255.8" x2="1380.5" y2="1255.8" stroke="#e6e6e6" stroke-width="2" stroke-linecap="butt"/>
<line x1="104" y1="1286.3" x2="1380.5" y2="1286.3" stroke="#dedede" stroke-width="2" stroke-linecap="butt"/>
<line x1="110.2" y1="1363.4" x2="110.2" y2="1424.4" stroke="#e4e4e4" stroke-width="2.6" stroke-linecap="butt"/>
<line x1="140.7" y1="1363.4" x2="140.7" y2="1424.4" stroke="#e4e4e4" stroke-width="2.6" stroke-linecap="butt"/>
<line x1="171.2" y1="1363.4" x2="171.2" y2="1424.4" stroke="#d4d4d4" stroke-width="3.2" stroke-linecap="butt"/>
<line x1="201.7" y1="1363.4" x2="201.7" y2="1424.4" stroke="#e4e4e4" stroke-width="2.6" stroke-linecap="butt"/>
<line x1="232.2" y1="1363.4" x2="232.2" y2="1424.4" stroke="#e4e4e4" stroke-width="2.6" stroke-linecap="butt"/>
<line x1="262.7" y1="1363.4" x2="262.7" y2="1424.4" stroke="#e4e4e4" stroke-width="2.6" stroke-linecap="butt"/>
<line x1="293.2" y1="1363.4" x2="293.2" y2="1424.4" stroke="#e4e4e4" stroke-width="2.6" stroke-linecap="butt"/>
<line x1="323.7" y1="1363.4" x2="323.7" y2="1424.4" stroke="#e4e4e4" stroke-width="2.6" stroke-linecap="butt"/>
<line x1="354.2" y1="1363.4" x2="354.2" y2="1424.4" stroke="#e4e4e4" stroke-width="2.6" stroke-linecap="butt"/>
<line x1="384.7" y1="1363.4" x2="384.7" y2="1424.4" stroke="#d4d4d4" stroke-width="3.2" stroke-linecap="butt"/>
<line x1="415.2" y1="1363.4" x2="415.2" y2="1424.4" stroke="#e4e4e4" stroke-width="2.6" stroke-linecap="butt"/>
<line x1="445.7" y1="1363.4" x2="445.7" y2="1424.4" stroke="#e4e4e4" stroke-width="2.6" stroke-linecap="butt"/>
<line x1="476.2" y1="1363.4" x2="476.2" y2="1424.4" stroke="#e4e4e4" stroke-width="2.6" stroke-linecap="butt"/>
<line x1="506.7" y1="1363.4" x2="506.7" y2="1424.4" stroke="#e4e4e4" stroke-width="2.6" stroke-linecap="butt"/>
<line x1="537.2" y1="1363.4" x2="537.2" y2="1424.4" stroke="#e4e4e4" stroke-width="2.6" stroke-linecap="butt"/>
<line x1="567.7" y1="1363.4" x2="567.7" y2="1424.4" stroke="#e4e4e4" stroke-width="2.6" stroke-linecap="butt"/>
<line x1="598.2" y1="1363.4" x2="598.2" y2="1424.4" stroke="#d4d4d4" stroke-width="3.2" stroke-linecap="butt"/>
<line x1="628.7" y1="1363.4" x2="628.7" y2="1424.4" stroke="#e4e4e4" stroke-width="2.6" stroke-linecap="butt"/>
<line x1="659.2" y1="1363.4" x2="659.2" y2="1424.4" stroke="#e4e4e4" stroke-width="2.6" stroke-linecap="butt"/>
<line x1="689.7" y1="1363.4" x2="689.7" y2="1424.4" stroke="#e4e4e4" stroke-width="2.6" stroke-linecap="butt"/>
<line x1="720.2" y1="1363.4" x2="720.2" y2="1424.4" stroke="#e4e4e4" stroke-width="2.6" stroke-linecap="butt"/>
<line x1="750.7" y1="1363.4" x2="750.7" y2="1424.4" stroke="#e4e4e4" stroke-width="2.6" stroke-linecap="butt"/>
<line x1="781.2" y1="1363.4" x2="781.2" y2="1424.4" stroke="#e4e4e4" stroke-width="2.6" stroke-linecap="butt"/>
<line x1="811.7" y1="1363.4" x2="811.7" y2="1424.4" stroke="#d4d4d4" stroke-width="3.2" stroke-linecap="butt"/>
<line x1="842.2" y1="1363.4" x2="842.2" y2="1424.4" stroke="#e4e4e4" stroke-width="2.6" stroke-linecap="butt"/>
<line x1="872.7" y1="1363.4" x2="872.7" y2="1424.4" stroke="#e4e4e4" stroke-width="2.6" stroke-linecap="butt"/>
<line x1="903.2" y1="1363.4" x2="903.2" y2="1424.4" stroke="#e4e4e4" stroke-width="2.6" stroke-linecap="butt"/>
<line x1="933.7" y1="1363.4" x2="933.7" y2="1424.4" stroke="#e4e4e4" stroke-width="2.6" stroke-linecap="butt"/>
<line x1="964.2" y1="1363.4" x2="964.2" y2="1424.4" stroke="#e4e4e4" stroke-width="2.6" stroke-linecap="butt"/>
<line x1="994.7" y1="1363.4" x2="994.7" y2="1424.4" stroke="#e4e4e4" stroke-width="2.6" stroke-linecap="butt"/>
<line x1="1025.2" y1="1363.4" x2="1025.2" y2="1424.4" stroke="#d4d4d4" stroke-width="3.2" stroke-linecap="butt"/>
<line x1="1055.7" y1="1363.4" x2="1055.7" y2="1424.4" stroke="#e4e4e4" stroke-width="2.6" stroke-linecap="butt"/>
<line x1="1086.2" y1="1363.4" x2="1086.2" y2="1424.4" stroke="#e4e4e4" stroke-width="2.6" stroke-linecap="butt"/>
<line x1="1116.7" y1="1363.4" x2="1116.7" y2="1424.4" stroke="#e4e4e4" stroke-width="2.6" stroke-linecap="butt"/>
<line x1="1147.2" y1="1363.4" x2="1147.2" y2="1424.4" stroke="#e4e4e4" stroke-width="2.6" stroke-linecap="butt"/>
<line x1="1177.7" y1="1363.4" x2="1177.7" y2="1424.4" stroke="#e4e4e4" stroke-width="2.6" stroke-linecap="butt"/>
<line x1="1208.2" y1="1363.4" x2="1208.2" y2="1424.4" stroke="#e4e4e4" stroke-width="2.6" stroke-linecap="butt"/>
<line x1="1238.7" y1="1363.4" x2="1238.7" y2="1424.4" stroke="#d4d4d4" stroke-width="3.2" stroke-linecap="butt"/>
<line x1="1269.2" y1="1363.4" x2="1269.2" y2="1424.4" stroke="#e4e4e4" stroke-width="2.6" stroke-linecap="butt"/>
<line x1="1299.7" y1="1363.4" x2="1299.7" y2="1424.4" stroke="#e4e4e4" stroke-width="2.6" stroke-linecap="butt"/>
<line x1="1330.2" y1="1363.4" x2="1330.2" y2="1424.4" stroke="#e4e4e4" stroke-width="2.6" stroke-linecap="butt"/>
<line x1="1360.7" y1="1363.4" x2="1360.7" y2="1424.4" stroke="#e4e4e4" stroke-width="2.6" stroke-linecap="butt"/>
<line x1="104" y1="1363.4" x2="1380.5" y2="1363.4" stroke="#dedede" stroke-width="2" stroke-linecap="butt"/>
<line x1="104" y1="1393.9" x2="1380.5" y2="1393.9" stroke="#e6e6e6" stroke-width="2" stroke-linecap="butt"/>
<line x1="104" y1="1424.4" x2="1380.5" y2="1424.4" stroke="#dedede" stroke-width="2" stroke-linecap="butt"/></g>
<g font-family="Liberation Sans, sans-serif"><text x="246.25" y="468.43" text-anchor="start" fill="#000" class="n">26</text>
<text x="246.25" y="532.23" text-anchor="start" fill="#000" class="n">29</text>
<text x="246.25" y="744.29" text-anchor="start" fill="#000" class="n">28</text>
<text x="246.25" y="807.69" text-anchor="start" fill="#000" class="n">31</text>
<text x="246.25" y="1020.15" text-anchor="start" fill="#000" class="n">30</text>
<text x="246.25" y="1083.15" text-anchor="start" fill="#000" class="n">33</text>
<text x="246.25" y="1296.01" text-anchor="start" fill="#000" class="n">32</text>
<text x="246.25" y="1358.61" text-anchor="start" fill="#000" class="n">35</text>
<text x="309.45" y="744.29" text-anchor="end" fill="#000" class="n">30</text>
<text x="338.65" y="744.29" text-anchor="start" fill="#000" class="n">30</text>
<text x="309.45" y="807.69" text-anchor="end" fill="#000" class="n">29</text>
<text x="338.65" y="807.69" text-anchor="start" fill="#000" class="n">29</text>
<text x="797.45" y="330.5" text-anchor="end" fill="#000" class="n">25</text>
<text x="825.75" y="330.5" text-anchor="start" fill="#000" class="n">25</text>
<text x="797.45" y="394.5" text-anchor="end" fill="#000" class="n">28</text>
<text x="825.75" y="394.5" text-anchor="start" fill="#000" class="n">28</text>
<text x="797.45" y="606.36" text-anchor="end" fill="#000" class="n">27</text>
<text x="825.75" y="606.36" text-anchor="start" fill="#000" class="n">27</text>
<text x="797.45" y="669.96" text-anchor="end" fill="#000" class="n">30</text>
<text x="825.75" y="669.96" text-anchor="start" fill="#000" class="n">30</text>
<text x="797.45" y="882.22" text-anchor="end" fill="#000" class="n">29</text>
<text x="825.75" y="882.22" text-anchor="start" fill="#000" class="n">29</text>
<text x="1010.95" y="330.5" text-anchor="end" fill="#000" class="n">27</text>
<text x="1040.45" y="330.5" text-anchor="start" fill="#000" class="n">27</text>
<text x="1010.95" y="394.5" text-anchor="end" fill="#000" class="n">26</text>
<text x="1040.45" y="394.5" text-anchor="start" fill="#000" class="n">26</text>
<text x="1010.95" y="606.36" text-anchor="end" fill="#000" class="n">29</text>
<text x="1040.45" y="606.36" text-anchor="start" fill="#000" class="n">29</text>
<text x="1010.95" y="669.96" text-anchor="end" fill="#000" class="n">28</text>
<text x="1040.45" y="669.96" text-anchor="start" fill="#000" class="n">28</text>
<text x="1010.95" y="882.22" text-anchor="end" fill="#000" class="n">31</text>
<text x="1040.45" y="882.22" text-anchor="start" fill="#000" class="n">31</text>
<text x="1010.95" y="945.42" text-anchor="end" fill="#000" class="n">30</text>
<text x="1040.45" y="945.42" text-anchor="start" fill="#000" class="n">30</text>
<text x="1010.95" y="1158.08" text-anchor="end" fill="#000" class="n">33</text>
<text x="1040.45" y="1158.08" text-anchor="start" fill="#000" class="n">33</text>
<text x="1010.95" y="1220.88" text-anchor="end" fill="#000" class="n">32</text>
<text x="1040.45" y="1220.88" text-anchor="start" fill="#000" class="n">32</text>
<text x="1010.95" y="1433.94" text-anchor="end" fill="#000" class="n">35</text>
<text x="1040.45" y="1433.94" text-anchor="start" fill="#000" class="n">35</text>
<text x="583.95" y="945.42" text-anchor="end" fill="#000" class="n">32</text>
<text x="612.25" y="945.42" text-anchor="start" fill="#000" class="n">32</text>
<text x="583.95" y="1158.08" text-anchor="end" fill="#000" class="n">31</text>
<text x="612.25" y="1158.08" text-anchor="start" fill="#000" class="n">31</text>
<text x="583.95" y="1220.88" text-anchor="end" fill="#000" class="n">34</text>
<text x="612.25" y="1220.88" text-anchor="start" fill="#000" class="n">34</text>
<text x="583.95" y="1433.94" text-anchor="end" fill="#000" class="n">33</text>
<text x="612.25" y="1433.94" text-anchor="start" fill="#000" class="n">33</text>
<text x="1224.45" y="945.42" text-anchor="end" fill="#000" class="n">32</text>
<text x="1252.75" y="945.42" text-anchor="start" fill="#000" class="n">32</text>
<text x="1224.45" y="1158.08" text-anchor="end" fill="#000" class="n">31</text>
<text x="1252.75" y="1158.08" text-anchor="start" fill="#000" class="n">31</text>
<text x="1224.45" y="1220.88" text-anchor="end" fill="#000" class="n">34</text>
<text x="1252.75" y="1220.88" text-anchor="start" fill="#000" class="n">34</text>
<text x="1224.45" y="1433.94" text-anchor="end" fill="#000" class="n">33</text>
<text x="1252.75" y="1433.94" text-anchor="start" fill="#000" class="n">33</text>
<text x="155.95" y="646.7" text-anchor="middle" fill="#c4c4c4" class="g">30</text>
<text x="186.45" y="646.7" text-anchor="middle" fill="#c4c4c4" class="g">30</text>
<text x="218.95" y="784.8" text-anchor="middle" fill="#c4c4c4" class="g">31</text>
<text x="521.95" y="784.8" text-anchor="middle" fill="#000" class="n">31</text>
<text x="552.45" y="784.8" text-anchor="middle" fill="#000" class="n">31</text>
<text x="857.45" y="784.8" text-anchor="middle" fill="#000" class="n">31</text>
<text x="887.95" y="784.8" text-anchor="middle" fill="#000" class="n">31</text>
<text x="1162.45" y="784.8" text-anchor="middle" fill="#000" class="n">31</text>
<text x="1192.95" y="784.8" text-anchor="middle" fill="#000" class="n">31</text>
<text x="643.95" y="767.1" text-anchor="middle" fill="#000" class="n">30</text>
<text x="674.45" y="767.1" text-anchor="middle" fill="#000" class="n">30</text>
<text x="643.95" y="784.8" text-anchor="middle" fill="#000" class="n">29</text>
<text x="674.45" y="784.8" text-anchor="middle" fill="#000" class="n">29</text>
<text x="948.95" y="767.1" text-anchor="middle" fill="#000" class="n">30</text>
<text x="979.45" y="767.1" text-anchor="middle" fill="#000" class="n">30</text>
<text x="948.95" y="784.8" text-anchor="middle" fill="#000" class="n">29</text>
<text x="979.45" y="784.8" text-anchor="middle" fill="#000" class="n">29</text>
<text x="1284.45" y="767.1" text-anchor="middle" fill="#000" class="n">30</text>
<text x="1314.95" y="767.1" text-anchor="middle" fill="#000" class="n">30</text>
<text x="1284.45" y="784.8" text-anchor="middle" fill="#000" class="n">29</text>
<text x="1314.95" y="784.8" text-anchor="middle" fill="#000" class="n">29</text>
<text x="155.95" y="904.6" text-anchor="middle" fill="#c4c4c4" class="g">29</text>
<text x="186.45" y="904.6" text-anchor="middle" fill="#c4c4c4" class="g">29</text>
<text x="369.45" y="904.6" text-anchor="middle" fill="#000" class="n">31</text>
<text x="399.95" y="904.6" text-anchor="middle" fill="#000" class="n">31</text>
<text x="369.45" y="922.9" text-anchor="middle" fill="#000" class="n">30</text>
<text x="399.95" y="922.9" text-anchor="middle" fill="#000" class="n">30</text>
<text x="218.95" y="1042.4" text-anchor="middle" fill="#c4c4c4" class="g">30</text>
<text x="521.95" y="1042.4" text-anchor="middle" fill="#000" class="n">30</text>
<text x="552.45" y="1042.4" text-anchor="middle" fill="#000" class="n">30</text>
<text x="857.45" y="1042.4" text-anchor="middle" fill="#000" class="n">30</text>
<text x="887.95" y="1042.4" text-anchor="middle" fill="#000" class="n">30</text>
<text x="1162.45" y="1042.4" text-anchor="middle" fill="#000" class="n">30</text>
<text x="1192.95" y="1042.4" text-anchor="middle" fill="#000" class="n">30</text></g>
<g stroke-linecap="butt"><path d="M155.95 650.4 V664.7 H140.7" stroke="#cdcdcd" stroke-width="3.4" fill="none" stroke-linejoin="miter"/>
<path d="M186.45 650.4 V664.7 H201.7" stroke="#cdcdcd" stroke-width="3.4" fill="none" stroke-linejoin="miter"/>
<path d="M216.95 788.5 V802.8 H201.7" stroke="#cdcdcd" stroke-width="3.4" fill="none" stroke-linejoin="miter"/>
<path d="M521.95 788.5 V802.8 H506.7" stroke="#6ea6de" stroke-width="3.4" fill="none" stroke-linejoin="miter"/>
<path d="M552.45 788.5 V802.8 H567.7" stroke="#6ea6de" stroke-width="3.4" fill="none" stroke-linejoin="miter"/>
<path d="M857.45 788.5 V802.8 H842.2" stroke="#6ea6de" stroke-width="3.4" fill="none" stroke-linejoin="miter"/>
<path d="M887.95 788.5 V802.8 H903.2" stroke="#6ea6de" stroke-width="3.4" fill="none" stroke-linejoin="miter"/>
<path d="M1162.45 788.5 V802.8 H1147.2" stroke="#6ea6de" stroke-width="3.4" fill="none" stroke-linejoin="miter"/>
<path d="M1192.95 788.5 V802.8 H1208.2" stroke="#6ea6de" stroke-width="3.4" fill="none" stroke-linejoin="miter"/>
<path d="M643.95 788.5 V802.8 H628.7" stroke="#6ea6de" stroke-width="3.4" fill="none" stroke-linejoin="miter"/>
<path d="M674.45 788.5 V802.8 H689.7" stroke="#6ea6de" stroke-width="3.4" fill="none" stroke-linejoin="miter"/>
<path d="M628.7 741.1 H643.95 V755.9" stroke="#6ea6de" stroke-width="3.4" fill="none" stroke-linejoin="miter"/>
<path d="M689.7 741.1 H674.45 V755.9" stroke="#6ea6de" stroke-width="3.4" fill="none" stroke-linejoin="miter"/>
<path d="M948.95 788.5 V802.8 H933.7" stroke="#6ea6de" stroke-width="3.4" fill="none" stroke-linejoin="miter"/>
<path d="M979.45 788.5 V802.8 H994.7" stroke="#6ea6de" stroke-width="3.4" fill="none" stroke-linejoin="miter"/>
<path d="M933.7 741.1 H948.95 V755.9" stroke="#6ea6de" stroke-width="3.4" fill="none" stroke-linejoin="miter"/>
<path d="M994.7 741.1 H979.45 V755.9" stroke="#6ea6de" stroke-width="3.4" fill="none" stroke-linejoin="miter"/>
<path d="M1284.45 788.5 V802.8 H1269.2" stroke="#6ea6de" stroke-width="3.4" fill="none" stroke-linejoin="miter"/>
<path d="M1314.95 788.5 V802.8 H1330.2" stroke="#6ea6de" stroke-width="3.4" fill="none" stroke-linejoin="miter"/>
<path d="M1269.2 741.1 H1284.45 V755.9" stroke="#6ea6de" stroke-width="3.4" fill="none" stroke-linejoin="miter"/>
<path d="M1330.2 741.1 H1314.95 V755.9" stroke="#6ea6de" stroke-width="3.4" fill="none" stroke-linejoin="miter"/>
<path d="M140.7 879.2 H155.95 V894" stroke="#cdcdcd" stroke-width="3.4" fill="none" stroke-linejoin="miter"/>
<path d="M201.7 879.2 H186.45 V894" stroke="#cdcdcd" stroke-width="3.4" fill="none" stroke-linejoin="miter"/>
<path d="M354.2 879.2 H369.45 V894" stroke="#e07070" stroke-width="3.4" fill="none" stroke-linejoin="miter"/>
<path d="M415.2 879.2 H399.95 V894" stroke="#e07070" stroke-width="3.4" fill="none" stroke-linejoin="miter"/>
<path d="M369.45 926.6 V940.9 H354.2" stroke="#e07070" stroke-width="3.4" fill="none" stroke-linejoin="miter"/>
<path d="M399.95 926.6 V940.9 H415.2" stroke="#e07070" stroke-width="3.4" fill="none" stroke-linejoin="miter"/>
<path d="M201.7 1017.3 H216.95 V1032.1" stroke="#cdcdcd" stroke-width="3.4" fill="none" stroke-linejoin="miter"/>
<path d="M506.7 1017.3 H521.95 V1032.1" stroke="#6ea6de" stroke-width="3.4" fill="none" stroke-linejoin="miter"/>
<path d="M567.7 1017.3 H552.45 V1032.1" stroke="#6ea6de" stroke-width="3.4" fill="none" stroke-linejoin="miter"/>
<path d="M842.2 1017.3 H857.45 V1032.1" stroke="#6ea6de" stroke-width="3.4" fill="none" stroke-linejoin="miter"/>
<path d="M903.2 1017.3 H887.95 V1032.1" stroke="#6ea6de" stroke-width="3.4" fill="none" stroke-linejoin="miter"/>
<path d="M1147.2 1017.3 H1162.45 V1032.1" stroke="#6ea6de" stroke-width="3.4" fill="none" stroke-linejoin="miter"/>
<path d="M1208.2 1017.3 H1192.95 V1032.1" stroke="#6ea6de" stroke-width="3.4" fill="none" stroke-linejoin="miter"/></g>
<g><line x1="262" y1="304.35" x2="700" y2="304.35" stroke="#969696" stroke-width="12" stroke-linecap="butt"/>
<line x1="262" y1="580.55" x2="700" y2="580.55" stroke="#7dd3c9" stroke-width="12" stroke-linecap="butt"/>
<line x1="262" y1="856.75" x2="700" y2="856.75" stroke="#7ab57a" stroke-width="12" stroke-linecap="butt"/>
<path d="M750 304.35 L797.25 304.35" stroke="#f74308" stroke-width="4.0" fill="none" stroke-linejoin="miter"/>
<path d="M794.25 262 L794.85 319.6" stroke="#f74308" stroke-width="4.0" fill="none" stroke-linejoin="miter"/>
<path d="M828.55 262 L827.95 319.6" stroke="#aaaa00" stroke-width="4.0" fill="none" stroke-linejoin="miter"/>
<path d="M826.95 304.35 L1009.95 304.35 L1009.95 411.95 L923.7 411.95" stroke="#aaaa00" stroke-width="4.0" fill="none" stroke-linejoin="miter"/>
<path d="M1381 304.35 L1039.55 304.35 L1039.55 411.95 L1090 411.95" stroke="#f74308" stroke-width="4.0" fill="none" stroke-linejoin="miter"/>
<path d="M1140 411.95 L1381 411.95" stroke="#cc0000" stroke-width="4.0" fill="none" stroke-linejoin="miter"/>
<path d="M255 411.95 L797.25 411.95" stroke="#888888" stroke-width="4.0" fill="none" stroke-linejoin="miter"/>
<path d="M794.85 396.7 L793.65 595.8" stroke="#888888" stroke-width="4.0" fill="none" stroke-linejoin="miter"/>
<path d="M750 580.55 L797.25 580.55" stroke="#888888" stroke-width="4.0" fill="none" stroke-linejoin="miter"/>
<path d="M827.95 396.7 L829.15 595.8" stroke="#333333" stroke-width="4.0" fill="none" stroke-linejoin="miter"/>
<path d="M826.95 411.95 L874.7 411.95" stroke="#333333" stroke-width="4.0" fill="none" stroke-linejoin="miter"/>
<path d="M826.95 580.55 L1009.95 580.55 L1009.95 688.15 L826.95 688.15" stroke="#333333" stroke-width="4.0" fill="none" stroke-linejoin="miter"/>
<path d="M827.95 672.9 L829.15 872" stroke="#333333" stroke-width="4.0" fill="none" stroke-linejoin="miter"/>
<path d="M826.95 856.75 L1009.95 856.75 L1009.95 964.35 L710 964.35" stroke="#333333" stroke-width="4.0" fill="none" stroke-linejoin="miter"/>
<path d="M255 688.15 L797.25 688.15" stroke="#03b6a2" stroke-width="4.0" fill="none" stroke-linejoin="miter"/>
<path d="M794.85 672.9 L793.65 872" stroke="#03b6a2" stroke-width="4.0" fill="none" stroke-linejoin="miter"/>
<path d="M750 856.75 L797.25 856.75" stroke="#03b6a2" stroke-width="4.0" fill="none" stroke-linejoin="miter"/>
<path d="M1305 580.55 L1039.55 580.55 L1039.55 688.15 L1381 688.15" stroke="#1700de" stroke-width="4.0" fill="none" stroke-linejoin="miter"/>
<path d="M1358 580.55 L1381 580.55" stroke="#b8056c" stroke-width="4.0" fill="none" stroke-linejoin="miter"/>
<path d="M1095 856.75 L1039.55 856.75 L1039.55 964.35 L1224.25 964.35" stroke="#007200" stroke-width="4.0" fill="none" stroke-linejoin="miter"/>
<path d="M1222.25 949.1 L1220.45 1148.2" stroke="#007200" stroke-width="4.0" fill="none" stroke-linejoin="miter"/>
<path d="M1224.25 1132.95 L1039.55 1132.95 L1039.55 1240.55 L1224.25 1240.55" stroke="#007200" stroke-width="4.0" fill="none" stroke-linejoin="miter"/>
<path d="M1222.25 1225.3 L1220.45 1424.4" stroke="#007200" stroke-width="4.0" fill="none" stroke-linejoin="miter"/>
<path d="M1224.25 1409.15 L1039.55 1409.15 L1039.55 1441" stroke="#007200" stroke-width="4.0" fill="none" stroke-linejoin="miter"/>
<path d="M1145 856.75 L1381 856.75" stroke="#1700de" stroke-width="4.0" fill="none" stroke-linejoin="miter"/>
<path d="M255 964.35 L583.75 964.35" stroke="#1700de" stroke-width="4.0" fill="none" stroke-linejoin="miter"/>
<path d="M580.55 949.1 L581.95 1148.2" stroke="#1700de" stroke-width="4.0" fill="none" stroke-linejoin="miter"/>
<path d="M255 1132.95 L583.75 1132.95" stroke="#1700de" stroke-width="4.0" fill="none" stroke-linejoin="miter"/>
<path d="M613.25 949.1 L613.25 1148.2" stroke="#1700de" stroke-width="4.0" fill="none" stroke-linejoin="miter"/>
<path d="M611.65 964.35 L661.2 964.35" stroke="#1700de" stroke-width="4.0" fill="none" stroke-linejoin="miter"/>
<path d="M611.65 1132.95 L1009.95 1132.95 L1009.95 1240.55 L611.65 1240.55" stroke="#1700de" stroke-width="4.0" fill="none" stroke-linejoin="miter"/>
<path d="M613.25 1225.3 L613.25 1424.4" stroke="#1700de" stroke-width="4.0" fill="none" stroke-linejoin="miter"/>
<path d="M611.65 1409.15 L700 1409.15" stroke="#1700de" stroke-width="4.0" fill="none" stroke-linejoin="miter"/>
<path d="M255 1240.55 L583.75 1240.55" stroke="#333333" stroke-width="4.0" fill="none" stroke-linejoin="miter"/>
<path d="M580.55 1225.3 L581.95 1424.4" stroke="#333333" stroke-width="4.0" fill="none" stroke-linejoin="miter"/>
<path d="M255 1409.15 L583.75 1409.15" stroke="#333333" stroke-width="4.0" fill="none" stroke-linejoin="miter"/>
<path d="M1253.95 949.1 L1253.95 1148.2" stroke="#888888" stroke-width="4.0" fill="none" stroke-linejoin="miter"/>
<path d="M1253.15 964.35 L1332.2 964.35" stroke="#888888" stroke-width="4.0" fill="none" stroke-linejoin="miter"/>
<path d="M1253.15 1132.95 L1381 1132.95" stroke="#888888" stroke-width="4.0" fill="none" stroke-linejoin="miter"/>
<path d="M1253.15 1240.55 L1381 1240.55" stroke="#888888" stroke-width="4.0" fill="none" stroke-linejoin="miter"/>
<path d="M1253.95 1225.3 L1253.95 1424.4" stroke="#888888" stroke-width="4.0" fill="none" stroke-linejoin="miter"/>
<path d="M1253.15 1409.15 L1305 1409.15" stroke="#888888" stroke-width="4.0" fill="none" stroke-linejoin="miter"/>
<path d="M1358 1409.15 L1381 1409.15" stroke="#7300de" stroke-width="4.0" fill="none" stroke-linejoin="miter"/>
<path d="M750 1409.15 L1009.95 1409.15 L1009.95 1441" stroke="#aaaa00" stroke-width="4.0" fill="none" stroke-linejoin="miter"/></g>
<g><polygon points="239.6,304.35 262.5,289.15 262.5,320.15" fill="#999999" stroke="#111" stroke-width="2"/>
<rect x="688.5" y="292.15" width="24.5" height="24.5" fill="#999999" stroke="#1a1a1a" stroke-width="2"/>
<polygon points="239.6,580.55 262.5,565.35 262.5,596.35" fill="#7dd3c9" stroke="#111" stroke-width="2"/>
<rect x="688.5" y="568.35" width="24.5" height="24.5" fill="#7dd3c9" stroke="#1a1a1a" stroke-width="2"/>
<polygon points="239.6,856.75 262.5,841.55 262.5,872.55" fill="#7ab57a" stroke="#111" stroke-width="2"/>
<rect x="688.5" y="844.55" width="24.5" height="24.5" fill="#7ab57a" stroke="#1a1a1a" stroke-width="2"/>
<polygon points="727.6,304.35 750.5,289.15 750.5,320.15" fill="#f74308" stroke="#111" stroke-width="2"/>
<rect x="909.2" y="399.75" width="24.5" height="24.5" fill="#aaaa00" stroke="#1a1a1a" stroke-width="2"/>
<polygon points="1109,411.95 1085.6,396.75 1085.6,427.75" fill="#f74308" stroke="#111" stroke-width="2"/>
<rect x="1122.7" y="399.75" width="24.5" height="24.5" fill="#cc0000" stroke="#1a1a1a" stroke-width="2"/>
<rect x="238.2" y="399.75" width="24.5" height="24.5" fill="#888888" stroke="#1a1a1a" stroke-width="2"/>
<polygon points="727.6,580.55 750.5,565.35 750.5,596.35" fill="#888888" stroke="#111" stroke-width="2"/>
<polygon points="895.5,411.95 872.1,396.75 872.1,427.75" fill="#333333" stroke="#111" stroke-width="2"/>
<rect x="695.7" y="952.15" width="24.5" height="24.5" fill="#333333" stroke="#1a1a1a" stroke-width="2"/>
<rect x="238.2" y="675.95" width="24.5" height="24.5" fill="#03b6a2" stroke="#1a1a1a" stroke-width="2"/>
<polygon points="727.6,856.75 750.5,841.55 750.5,872.55" fill="#03b6a2" stroke="#111" stroke-width="2"/>
<rect x="1298.5" y="568.35" width="24.5" height="24.5" fill="#1700de" stroke="#1a1a1a" stroke-width="2"/>
<polygon points="1337.6,580.55 1360.5,565.35 1360.5,596.35" fill="#b8056c" stroke="#111" stroke-width="2"/>
<rect x="1085" y="844.55" width="24.5" height="24.5" fill="#007200" stroke="#1a1a1a" stroke-width="2"/>
<polygon points="1124.1,856.75 1147,841.55 1147,872.55" fill="#1700de" stroke="#111" stroke-width="2"/>
<rect x="238.2" y="952.15" width="24.5" height="24.5" fill="#1700de" stroke="#1a1a1a" stroke-width="2"/>
<polygon points="239.6,1132.95 262.5,1117.75 262.5,1148.75" fill="#1700de" stroke="#111" stroke-width="2"/>
<polygon points="682,964.35 658.6,949.15 658.6,980.15" fill="#1700de" stroke="#111" stroke-width="2"/>
<rect x="688.5" y="1396.95" width="24.5" height="24.5" fill="#1700de" stroke="#1a1a1a" stroke-width="2"/>
<rect x="238.2" y="1228.35" width="24.5" height="24.5" fill="#333333" stroke="#1a1a1a" stroke-width="2"/>
<polygon points="239.6,1409.15 262.5,1393.95 262.5,1424.95" fill="#333333" stroke="#111" stroke-width="2"/>
<polygon points="1353,964.35 1329.6,949.15 1329.6,980.15" fill="#888888" stroke="#111" stroke-width="2"/>
<rect x="1298.5" y="1396.95" width="24.5" height="24.5" fill="#888888" stroke="#1a1a1a" stroke-width="2"/>
<rect x="1366.7" y="952.15" width="24.5" height="24.5" fill="#b8056c" stroke="#1a1a1a" stroke-width="2"/>
<polygon points="1337.6,1409.15 1360.5,1393.95 1360.5,1424.95" fill="#7300de" stroke="#111" stroke-width="2"/>
<polygon points="727.6,1409.15 750.5,1393.95 750.5,1424.95" fill="#aaaa00" stroke="#111" stroke-width="2"/></g>
<g><line x1="246.45" y1="273.85" x2="1381" y2="273.85" stroke="#0066cc" stroke-width="4.9" stroke-linecap="butt"/>
<line x1="246.45" y1="550.05" x2="1381" y2="550.05" stroke="#0066cc" stroke-width="4.9" stroke-linecap="butt"/>
<line x1="246.45" y1="826.25" x2="308.95" y2="826.25" stroke="#0066cc" stroke-width="4.9" stroke-linecap="butt"/>
<line x1="337.45" y1="826.25" x2="1381" y2="826.25" stroke="#0066cc" stroke-width="4.9" stroke-linecap="butt"/>
<line x1="246.45" y1="1102.45" x2="1381" y2="1102.45" stroke="#0066cc" stroke-width="4.9" stroke-linecap="butt"/>
<line x1="246.45" y1="1378.65" x2="1381" y2="1378.65" stroke="#0066cc" stroke-width="4.9" stroke-linecap="butt"/>
<line x1="246.45" y1="442.45" x2="1381" y2="442.45" stroke="#0066cc" stroke-width="4.9" stroke-linecap="butt"/>
<line x1="246.45" y1="718.65" x2="308.95" y2="718.65" stroke="#0066cc" stroke-width="4.9" stroke-linecap="butt"/>
<line x1="337.45" y1="718.65" x2="1381" y2="718.65" stroke="#0066cc" stroke-width="4.9" stroke-linecap="butt"/>
<line x1="246.45" y1="994.85" x2="1381" y2="994.85" stroke="#0066cc" stroke-width="4.9" stroke-linecap="butt"/>
<line x1="246.45" y1="1271.05" x2="1381" y2="1271.05" stroke="#0066cc" stroke-width="4.9" stroke-linecap="butt"/>
<path d="M246.65 262 L248.65 359.85 L246.65 457.7" stroke="#0066cc" stroke-width="4.9" fill="none" stroke-linejoin="miter"/>
<path d="M246.65 534.8 L248.65 634.35 L246.65 733.9" stroke="#0066cc" stroke-width="4.9" fill="none" stroke-linejoin="miter"/>
<path d="M246.65 811 L248.65 910.55 L246.65 1010.1" stroke="#0066cc" stroke-width="4.9" fill="none" stroke-linejoin="miter"/>
<path d="M246.65 1087.2 L248.65 1186.75 L246.65 1286.3" stroke="#0066cc" stroke-width="4.9" fill="none" stroke-linejoin="miter"/>
<path d="M246.65 1363.4 L248.65 1402.2 L246.65 1441" stroke="#0066cc" stroke-width="4.9" fill="none" stroke-linejoin="miter"/>
<line x1="307.65" y1="718.65" x2="307.65" y2="826.25" stroke="#0066cc" stroke-width="4.9" stroke-linecap="butt"/>
<line x1="339.15" y1="718.65" x2="339.15" y2="826.25" stroke="#0066cc" stroke-width="4.9" stroke-linecap="butt"/></g>
<g><line x1="376.7" y1="264" x2="375.6" y2="1439.5" stroke="#0066cc" stroke-width="4.4" stroke-linecap="butt"/>
<line x1="697.6" y1="264" x2="696.8" y2="1439.5" stroke="#0066cc" stroke-width="4.4" stroke-linecap="butt"/>
<line x1="866.5" y1="264" x2="864.6" y2="1439.5" stroke="#ff3030" stroke-width="4.4" stroke-linecap="butt"/>
<line x1="1182.6" y1="264" x2="1184.4" y2="1439.5" stroke="#5cbc0a" stroke-width="4.4" stroke-linecap="butt"/></g>
<g opacity="0.42"><rect x="596.5" y="262" width="32.5" height="1177.5" fill="#f5b27a"/>
<rect x="596.5" y="262" width="2.6" height="1177.5" fill="#c87a40"/>
<rect x="627.8" y="262" width="1.2" height="1177.5" fill="#d89060"/></g>
</g></svg>
<svg class="abs" style="left:0;top:0" width="1500" height="1461" font-family="Liberation Sans, sans-serif">
<text x="689.2" y="88.0" font-size="20.5" fill="#e2e2e2" stroke="#e2e2e2" stroke-width="0.15" textLength="80.2" lengthAdjust="spacingAndGlyphs">cadnano</text>
<text x="15.2" y="127.3" font-size="21.4" fill="#e4e4e4" stroke="#e4e4e4" stroke-width="0.50" textLength="34.5" lengthAdjust="spacingAndGlyphs">File</text>
<text x="80.2" y="127.3" font-size="21.4" fill="#e4e4e4" stroke="#e4e4e4" stroke-width="0.50" textLength="40.2" lengthAdjust="spacingAndGlyphs">Edit</text>
<text x="150.7" y="127.3" font-size="21.4" fill="#e4e4e4" stroke="#e4e4e4" stroke-width="0.50" textLength="75.7" lengthAdjust="spacingAndGlyphs">Plugins</text>
<text x="35.2" y="227.2" font-size="21.4" fill="#e4e4e4" stroke="#e4e4e4" stroke-width="0.50" textLength="44.7" lengthAdjust="spacingAndGlyphs">New</text>
<text x="114.2" y="227.2" font-size="21.4" fill="#e4e4e4" stroke="#e4e4e4" stroke-width="0.50" textLength="55.2" lengthAdjust="spacingAndGlyphs">Open</text>
<text x="203.2" y="227.2" font-size="21.4" fill="#e4e4e4" stroke="#e4e4e4" stroke-width="0.50" textLength="47.2" lengthAdjust="spacingAndGlyphs">Save</text>
<text x="283.7" y="227.2" font-size="21.4" fill="#e4e4e4" stroke="#e4e4e4" stroke-width="0.50" textLength="42.2" lengthAdjust="spacingAndGlyphs">SVG</text>
<text x="360.7" y="227.2" font-size="21.4" fill="#e4e4e4" stroke="#e4e4e4" stroke-width="0.50" textLength="68.7" lengthAdjust="spacingAndGlyphs">Export</text>
<text x="468.7" y="227.2" font-size="21.4" fill="#e4e4e4" stroke="#e4e4e4" stroke-width="0.50" textLength="123.4" lengthAdjust="spacingAndGlyphs">Honeycomb</text>
<text x="626.4" y="227.2" font-size="21.4" fill="#e4e4e4" stroke="#e4e4e4" stroke-width="0.50" textLength="72.3" lengthAdjust="spacingAndGlyphs">Square</text>
<text x="738.9" y="227.2" font-size="21.4" fill="#e4e4e4" stroke="#e4e4e4" stroke-width="0.50" textLength="112.2" lengthAdjust="spacingAndGlyphs">AutoStaple</text>
<text x="885.8" y="227.2" font-size="21.4" fill="#e4e4e4" stroke="#e4e4e4" stroke-width="0.50" textLength="107.6" lengthAdjust="spacingAndGlyphs">AutoBreak</text>
<text x="1032.2" y="199.6" font-size="21.4" fill="#8a8a8a" stroke="#8a8a8a" stroke-width="0.30" textLength="112.2" lengthAdjust="spacingAndGlyphs">Selectable:</text>
<text x="24.2" y="370.8" font-size="21.4" fill="#e4e4e4" stroke="#e4e4e4" stroke-width="0.50" textLength="47.2" lengthAdjust="spacingAndGlyphs">First</text>
<text x="24.7" y="486.0" font-size="21.4" fill="#e4e4e4" stroke="#e4e4e4" stroke-width="0.50" textLength="43.7" lengthAdjust="spacingAndGlyphs">Last</text>
<text x="18.2" y="601.7" font-size="21.4" fill="#e4e4e4" stroke="#e4e4e4" stroke-width="0.50" textLength="58.6" lengthAdjust="spacingAndGlyphs">Rnum</text>
<text x="1408.2" y="372.4" font-size="21.4" fill="#c6c6c6" stroke="#c6c6c6" stroke-width="0.30" textLength="61.2" lengthAdjust="spacingAndGlyphs">Select</text>
<text x="1405.7" y="486.3" font-size="21.4" fill="#e4e4e4" stroke="#e4e4e4" stroke-width="0.50" textLength="60.3" lengthAdjust="spacingAndGlyphs">Pencil</text>
<text x="1408.2" y="601.0" font-size="21.4" fill="#e4e4e4" stroke="#e4e4e4" stroke-width="0.50" textLength="58.2" lengthAdjust="spacingAndGlyphs">Break</text>
<text x="1405.9" y="717.4" font-size="21.4" fill="#e4e4e4" stroke="#e4e4e4" stroke-width="0.50" textLength="61.5" lengthAdjust="spacingAndGlyphs">Insert</text>
<text x="1414.2" y="832.6" font-size="21.4" fill="#e4e4e4" stroke="#e4e4e4" stroke-width="0.50" textLength="45.2" lengthAdjust="spacingAndGlyphs">Skip</text>
<text x="1410.2" y="948.6" font-size="21.4" fill="#e4e4e4" stroke="#e4e4e4" stroke-width="0.50" textLength="53.0" lengthAdjust="spacingAndGlyphs">Paint</text>
<text x="1417.5" y="1064.3" font-size="21.4" fill="#e4e4e4" stroke="#e4e4e4" stroke-width="0.50" textLength="37.7" lengthAdjust="spacingAndGlyphs">Seq</text>
</svg>
<svg class="abs" style="left:0;top:0" width="1500" height="1461">
<defs>
<linearGradient id="gPage" x1="0" y1="0" x2="0" y2="1"><stop offset="0" stop-color="#d6ebfa"/><stop offset="1" stop-color="#b9d9f2"/></linearGradient>
<linearGradient id="gFold" x1="0" y1="0" x2="1" y2="1"><stop offset="0" stop-color="#ffffff"/><stop offset="1" stop-color="#c8dcec"/></linearGradient>
<linearGradient id="gFolderB" x1="0" y1="0" x2="0" y2="1"><stop offset="0" stop-color="#8fb6ea"/><stop offset="1" stop-color="#5f8fd6"/></linearGradient>
<linearGradient id="gFolderF" x1="0" y1="0" x2="0" y2="1"><stop offset="0" stop-color="#a9c8f2"/><stop offset="1" stop-color="#6a9be0"/></linearGradient>
<linearGradient id="gOrangeArrow" x1="0" y1="0" x2="0" y2="1"><stop offset="0" stop-color="#f7c9a0"/><stop offset="0.48" stop-color="#f2b07a"/><stop offset="0.52" stop-color="#e8740e"/><stop offset="1" stop-color="#e36a08"/></linearGradient>
<radialGradient id="gOrangeDot" cx="0.4" cy="0.35" r="0.7"><stop offset="0" stop-color="#ffd08a"/><stop offset="0.6" stop-color="#f59a2a"/><stop offset="1" stop-color="#d9730c"/></radialGradient>
<radialGradient id="gBlueDot" cx="0.4" cy="0.35" r="0.7"><stop offset="0" stop-color="#8fc0ff"/><stop offset="0.6" stop-color="#2f7de8"/><stop offset="1" stop-color="#1452b8"/></radialGradient>
<linearGradient id="gPlus" x1="0" y1="0" x2="0" y2="1"><stop offset="0" stop-color="#8ec4f7"/><stop offset="0.5" stop-color="#4c97e6"/><stop offset="1" stop-color="#2a70c8"/></linearGradient>
<linearGradient id="gX" x1="0" y1="0" x2="0" y2="1"><stop offset="0" stop-color="#f4923a"/><stop offset="0.5" stop-color="#e46410"/><stop offset="1" stop-color="#c93c06"/></linearGradient>
<linearGradient id="gPencil" x1="0" y1="0" x2="1" y2="1"><stop offset="0" stop-color="#a9d3ff"/><stop offset="0.5" stop-color="#3d86f0"/><stop offset="1" stop-color="#1c4fc4"/></linearGradient>
</defs>
<path d="M40.5 153 H60.5 L76.5 169.5 V195.5 H40.5 Z" fill="url(#gPage)" stroke="#9fbfd8" stroke-width="0.8"/>
<path d="M60.5 153 V169.5 H76.5 Z" fill="url(#gFold)"/>
<path d="M121 159 H134 L137 162.5 H155.5 V168 H121 Z" fill="url(#gFolderB)"/>
<path d="M121 162 H155.5 V191.5 H121 Z" fill="#6a9ae0"/>
<path d="M129.5 170.5 H164.5 L156 191.5 H121 Z" fill="url(#gFolderF)"/>
<path d="M129.5 170.5 H164.5" stroke="#d0e4fa" stroke-width="1.2"/>
<rect x="208.3" y="155.3" width="38.4" height="42.2" rx="1.5" fill="#2f2f2f"/>
<rect x="216" y="155.5" width="23.5" height="16" fill="#cdeceb"/>
<rect x="231.5" y="158" width="4.5" height="11" fill="#2a2a2a"/>
<rect x="211.5" y="173" width="32" height="19.5" fill="#dde9f2"/>
<rect x="211.5" y="177.2" width="32" height="1.3" fill="#d8b896"/>
<rect x="211.5" y="181.5" width="32" height="1.3" fill="#d8b896"/>
<rect x="211.5" y="185.8" width="32" height="1.3" fill="#d8b896"/>
<rect x="211.5" y="190.0" width="32" height="1.3" fill="#d8b896"/>
<rect x="211.5" y="192" width="32" height="5" fill="#ef8410"/>
<path d="M306.5 158.5 V172 M295.5 164.5 L302 172 M317.5 164.5 L311 172" stroke="#1a66d0" stroke-width="8.5" stroke-linecap="round" fill="none"/>
<rect x="288" y="169" width="37" height="6" rx="2" fill="#1a66d0"/>
<path d="M306.5 159.5 V172 M295.5 164.5 L302 171.5 M317.5 164.5 L311 171.5 M300 172.6 H313 M289.5 173 H293.5 M319 173 H323" stroke="#ffffff" stroke-width="2.8" fill="none"/>
<rect x="284.3" y="174.5" width="43" height="24" fill="#1b6ad8"/>
<rect x="284.3" y="174.5" width="43" height="10" fill="#5a98e4"/>
<text x="306" y="196" text-anchor="middle" font-family="Liberation Sans, sans-serif" font-weight="bold" font-size="24" fill="#ffffff" textLength="35.6" lengthAdjust="spacingAndGlyphs">SVG</text>
<text x="395" y="175.5" text-anchor="middle" font-family="Liberation Sans, sans-serif" font-size="23.5" fill="#686868" textLength="36" lengthAdjust="spacingAndGlyphs">AC</text>
<text x="395" y="178.5" transform="rotate(180 395 187)" text-anchor="middle" font-family="Liberation Sans, sans-serif" font-size="23.5" fill="#686868" textLength="36" lengthAdjust="spacingAndGlyphs" dy="17">GT</text>
<circle cx="531.0" cy="165.2" r="5.4" fill="url(#gOrangeDot)"/>
<circle cx="520.8" cy="170.6" r="5.4" fill="url(#gOrangeDot)"/>
<circle cx="541.7" cy="170.6" r="5.4" fill="url(#gOrangeDot)"/>
<circle cx="520.8" cy="181.4" r="5.4" fill="url(#gOrangeDot)"/>
<circle cx="541.7" cy="181.4" r="5.4" fill="url(#gOrangeDot)"/>
<circle cx="531.0" cy="187.0" r="5.4" fill="url(#gOrangeDot)"/>
<path d="M541.5 182 V193.5 M535.8 187.7 H547.2" stroke="#ffffff" stroke-width="2.2"/>
<circle cx="651.9" cy="164.8" r="5.5" fill="url(#gBlueDot)"/>
<circle cx="651.9" cy="176.3" r="5.5" fill="url(#gBlueDot)"/>
<circle cx="651.9" cy="187.8" r="5.5" fill="url(#gBlueDot)"/>
<circle cx="662.9" cy="164.8" r="5.5" fill="url(#gBlueDot)"/>
<circle cx="662.9" cy="176.3" r="5.5" fill="url(#gBlueDot)"/>
<circle cx="662.9" cy="187.8" r="5.5" fill="url(#gBlueDot)"/>
<circle cx="674.0" cy="164.8" r="5.5" fill="url(#gBlueDot)"/>
<circle cx="674.0" cy="176.3" r="5.5" fill="url(#gBlueDot)"/>
<path d="M673.5 182 V194 M667.5 188 H679.5" stroke="#ffffff" stroke-width="2.2"/>
<path d="M776 173 L806 182 L815 185 L817.5 191 L808 194 L778 180.5 L775.5 176 Z" fill="#ff2a22"/>
<path d="M775 163.5 L781 161.5 L814 168.5 L814.5 178.5 L802 177 L776 173 Z" fill="#ff3226"/>
<path d="M786 173.5 L801 178.5" stroke="#f0f0f0" stroke-width="1.8" stroke-dasharray="3.2 1.4"/>
<rect x="803" y="178.5" width="7" height="8" fill="#dcdcdc"/>
<rect x="805.3" y="181" width="2.4" height="3" fill="#c02020"/>
<path d="M935 176.5 L958.5 166 M935 176.5 L958.5 188" stroke="#bdbdbd" stroke-width="2.6"/>
<circle cx="924.8" cy="164.8" r="4.6" fill="none" stroke="#2f5de8" stroke-width="2.6"/>
<circle cx="924.8" cy="189.2" r="4.6" fill="none" stroke="#2f5de8" stroke-width="2.6"/>
<path d="M927.5 168.5 L935 176.5 L927.5 185.5" stroke="#2f5de8" stroke-width="3" fill="none"/>
<ellipse cx="1194" cy="209.5" rx="15" ry="1.6" fill="#333" opacity="0.7"/>
<text x="1196" y="195" text-anchor="middle" font-family="Liberation Sans, sans-serif" font-size="16.5" fill="#1866c8" stroke="#1866c8" stroke-width="0.6" textLength="43.5" lengthAdjust="spacingAndGlyphs">SCAF</text>
<ellipse cx="1266" cy="212" rx="18" ry="1.8" fill="#6e6e6e" opacity="0.8"/>
<text x="1267" y="196.3" text-anchor="middle" font-family="Liberation Sans, sans-serif" font-size="16.5" fill="#d81818" stroke="#d81818" stroke-width="0.6" textLength="40" lengthAdjust="spacingAndGlyphs">STAP</text>
<ellipse cx="1333" cy="210.5" rx="7" ry="1.5" fill="#333" opacity="0.7"/>
<circle cx="1333.2" cy="175.2" r="5.6" fill="url(#gOrangeDot)"/>
<circle cx="1333.2" cy="188.3" r="5.6" fill="url(#gOrangeDot)"/>
<circle cx="1333.2" cy="200.4" r="5.6" fill="url(#gOrangeDot)"/>
<ellipse cx="1402" cy="212" rx="18" ry="1.8" fill="#6e6e6e" opacity="0.8"/>
<rect x="1388.7" y="180" width="10.3" height="9.3" fill="#1a78e0"/>
<path d="M1399 184.6 H1412" stroke="#5a9de6" stroke-width="2.4"/>
<path d="M1411 178.5 L1420 184.6 L1411 190.7 Z" fill="#1a78e0"/>
<rect x="1409.2" y="195.7" width="9.3" height="9.3" fill="#dd1010"/>
<path d="M1395 200.3 H1409.2" stroke="#e05a5a" stroke-width="2.4"/>
<path d="M1397 194.2 L1388.5 200.3 L1397 206.4 Z" fill="#dd1010"/>
<path d="M1468 188.5 L1472.5 193.2 L1468 197.8 M1474.5 188.5 L1479 193.2 L1474.5 197.8" stroke="#050505" stroke-width="2.7" fill="none"/>
<rect x="21.5" y="288" width="9.2" height="45.4" fill="url(#gOrangeArrow)" stroke="#9c4410" stroke-width="1.3"/>
<path d="M29 310.7 L52 288.2 V298.5 H71.4 V323.3 H52 V333.4 Z" fill="url(#gOrangeArrow)" stroke="#9c4410" stroke-width="1.3"/>
<rect x="62.4" y="404.3" width="9" height="44.7" fill="url(#gOrangeArrow)" stroke="#9c4410" stroke-width="1.3"/>
<path d="M64 426.6 L41 404.3 V414.5 H21.3 V439 H41 V449 Z" fill="url(#gOrangeArrow)" stroke="#9c4410" stroke-width="1.3"/>
<circle cx="29.6" cy="522.9" r="8.6" fill="#f6c48f" stroke="#e07810" stroke-width="2"/>
<text x="29.6" y="527.2" text-anchor="middle" font-family="Liberation Sans, sans-serif" font-size="12" fill="#222">3</text>
<circle cx="65.7" cy="522.9" r="8.6" fill="#f6c48f" stroke="#e07810" stroke-width="2"/>
<text x="65.7" y="527.2" text-anchor="middle" font-family="Liberation Sans, sans-serif" font-size="12" fill="#222">1</text>
<path d="M41 520.4 H47 V516.9 L53.5 522.9 L47 528.9 V525.4 H41 Z" fill="#1a72e0"/>
<circle cx="29.6" cy="542.6" r="8.6" fill="#f6c48f" stroke="#e07810" stroke-width="2"/>
<text x="29.6" y="546.9" text-anchor="middle" font-family="Liberation Sans, sans-serif" font-size="12" fill="#222">1</text>
<circle cx="65.7" cy="542.6" r="8.6" fill="#f6c48f" stroke="#e07810" stroke-width="2"/>
<text x="65.7" y="546.9" text-anchor="middle" font-family="Liberation Sans, sans-serif" font-size="12" fill="#222">2</text>
<path d="M41 540.1 H47 V536.6 L53.5 542.6 L47 548.6 V545.1 H41 Z" fill="#1a72e0"/>
<circle cx="29.6" cy="561.4" r="8.6" fill="#f6c48f" stroke="#e07810" stroke-width="2"/>
<text x="29.6" y="565.7" text-anchor="middle" font-family="Liberation Sans, sans-serif" font-size="12" fill="#222">2</text>
<circle cx="65.7" cy="561.4" r="8.6" fill="#f6c48f" stroke="#e07810" stroke-width="2"/>
<text x="65.7" y="565.7" text-anchor="middle" font-family="Liberation Sans, sans-serif" font-size="12" fill="#222">3</text>
<path d="M41 558.9 H47 V555.4 L53.5 561.4 L47 567.4 V563.9 H41 Z" fill="#1a72e0"/>
<path d="M1424.5 288 L1455 318.5 L1441.5 319 L1448 332.5 L1440.5 336 L1434 322.5 L1424.5 331.5 Z" fill="#f2f2f2" stroke="#1a6cf0" stroke-width="2.6" stroke-linejoin="miter"/>
<ellipse cx="1437" cy="451" rx="20" ry="2.4" fill="#2e2e2e" opacity="0.8"/>
<path d="M1418 433 L1446 405 L1457 416 L1429 444 Z" fill="url(#gPencil)"/>
<path d="M1446 405 L1451 400 L1462 411 L1457 416 Z" fill="#e6e6e6"/>
<path d="M1451 400 L1454 397.5 Q1458 396 1462 400 Q1464.5 404 1462.5 407 L1462 411 Z" fill="#e07a7a"/>
<path d="M1418 433 L1429 444 L1410 451.5 Z" fill="#f3c55a"/>
<path d="M1413 446 L1415.5 448.5 L1410 451.5 Z" fill="#222"/>
<rect x="1405.8" y="512.8" width="62.5" height="17.4" fill="none" stroke="#6a6a6a" stroke-width="1"/>
<path d="M1421.5 512.8 V530.2" stroke="#6a6a6a" stroke-width="1"/>
<path d="M1437.0 512.8 V530.2" stroke="#6a6a6a" stroke-width="1"/>
<path d="M1452.5 512.8 V530.2" stroke="#6a6a6a" stroke-width="1"/>
<path d="M1405.8 521.5 H1468.3" stroke="#6a6a6a" stroke-width="1"/>
<rect x="1405.8" y="557.0" width="62.5" height="17.4" fill="none" stroke="#6a6a6a" stroke-width="1"/>
<path d="M1421.5 557.0 V574.4" stroke="#6a6a6a" stroke-width="1"/>
<path d="M1437.0 557.0 V574.4" stroke="#6a6a6a" stroke-width="1"/>
<path d="M1452.5 557.0 V574.4" stroke="#6a6a6a" stroke-width="1"/>
<path d="M1405.8 565.7 H1468.3" stroke="#6a6a6a" stroke-width="1"/>
<path d="M1406 521.5 H1468" stroke="#1a72e0" stroke-width="4"/>
<path d="M1431 535 H1443 V543 H1449 L1437 554.7 L1425 543 H1431 Z" fill="#e00000"/>
<path d="M1406 565.7 H1422" stroke="#1a72e0" stroke-width="4"/>
<path d="M1421 559 L1433 565.7 L1421 572.4 Z" fill="#1a72e0"/>
<rect x="1441.5" y="558.5" width="10" height="14.5" fill="#1a72e0"/>
<path d="M1451 565.7 H1468" stroke="#1a72e0" stroke-width="4"/>
<ellipse cx="1436" cy="688" rx="24" ry="2.5" fill="#333" opacity="0.8"/>
<path d="M1427 630 H1446 Q1448 630 1448 632 V649 H1465 Q1467 649 1467 651 V666 Q1467 668 1465 668 H1448 V686 Q1448 688 1446 688 H1427 Q1425 688 1425 686 V668 H1406.5 Q1404.5 668 1404.5 666 V651 Q1404.5 649 1406.5 649 H1425 V632 Q1425 630 1427 630 Z" fill="url(#gPlus)"/>
<ellipse cx="1438" cy="801" rx="22" ry="2.5" fill="#333" opacity="0.8"/>
<path d="M1418.5 753.5 L1457.5 792.5 M1457.5 753.5 L1418.5 792.5" stroke="url(#gX)" stroke-width="15.5" stroke-linecap="round"/>
<path d="M1410 902 Q1415 891 1424 887 L1453 905 Q1448 915 1432 917.5 Q1418 913 1410 902 Z" fill="#2f6fe6"/>
<path d="M1416 899 Q1420 892 1425 890 L1448 904 Q1444 910 1433 912 Q1422 908 1416 899 Z" fill="#3f82f0"/>
<path d="M1425 885 L1446 899 L1444 906 L1441 900 L1437 904 L1433 896 L1430 900 L1425 893 Z" fill="#a8561c"/>
<path d="M1427 879.5 L1452 899" stroke="#e8e8e8" stroke-width="4.2"/>
<path d="M1440 884 L1455 865 Q1459 862 1461.5 866 Q1462.5 869 1460 872 L1450 892 Z" fill="#262626"/>
<text x="1437.8" y="1004.7" text-anchor="middle" font-family="Liberation Sans, sans-serif" font-size="32" font-weight="bold" fill="#e00000" textLength="48" lengthAdjust="spacingAndGlyphs">AC</text>
<text x="1437.8" y="1033.2" transform="rotate(180 1437.8 1021.1)" text-anchor="middle" font-family="Liberation Sans, sans-serif" font-size="32" font-weight="bold" fill="#1a82f0" textLength="48" lengthAdjust="spacingAndGlyphs">GT</text>
</svg>
</body></html>
